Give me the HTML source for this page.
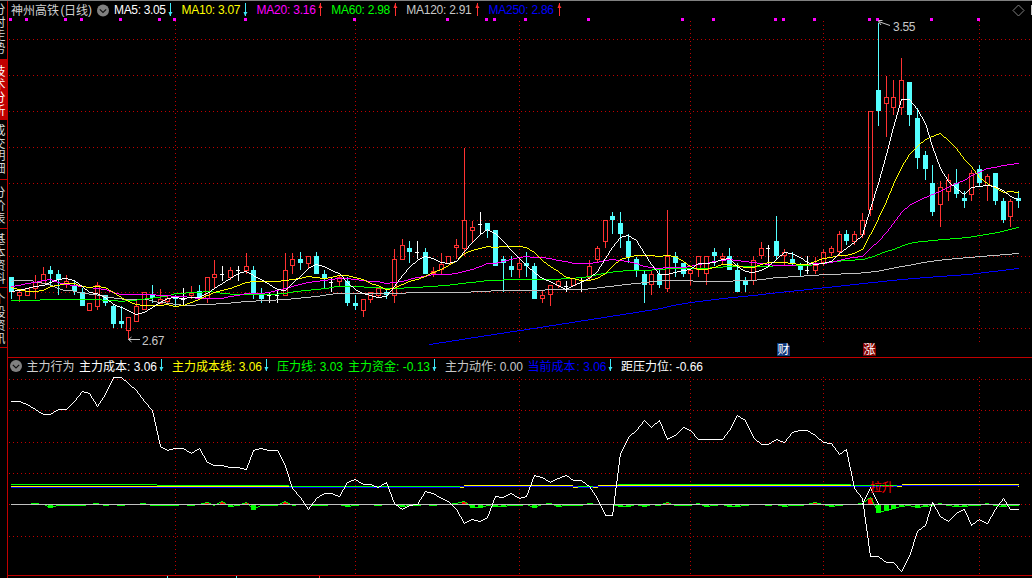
<!DOCTYPE html>
<html><head><meta charset="utf-8"><title>chart</title>
<style>html,body{margin:0;padding:0;background:#000;overflow:hidden}body{width:1032px;height:578px;font-family:"Liberation Sans",sans-serif}svg text{font-family:"Liberation Sans",sans-serif}svg text.cjk{font-family:"Liberation Sans","Noto Sans CJK SC",sans-serif}</style>
</head><body><svg width="1032" height="578" viewBox="0 0 1032 578" style="display:block"><rect x="0" y="0" width="1032" height="578" fill="#000"/>
<rect x="0" y="0" width="1032" height="1" fill="#808080"/>
<path d="M9 39h1M13 39h1M17 39h1M21 39h1M25 39h1M29 39h1M33 39h1M37 39h1M41 39h1M45 39h1M49 39h1M53 39h1M57 39h1M61 39h1M65 39h1M69 39h1M73 39h1M77 39h1M81 39h1M85 39h1M89 39h1M93 39h1M97 39h1M101 39h1M105 39h1M109 39h1M113 39h1M117 39h1M121 39h1M125 39h1M129 39h1M133 39h1M137 39h1M141 39h1M145 39h1M149 39h1M153 39h1M157 39h1M161 39h1M165 39h1M169 39h1M173 39h1M177 39h1M181 39h1M185 39h1M189 39h1M193 39h1M197 39h1M201 39h1M205 39h1M209 39h1M213 39h1M217 39h1M221 39h1M225 39h1M229 39h1M233 39h1M237 39h1M241 39h1M245 39h1M249 39h1M253 39h1M257 39h1M261 39h1M265 39h1M269 39h1M273 39h1M277 39h1M281 39h1M285 39h1M289 39h1M293 39h1M297 39h1M301 39h1M305 39h1M309 39h1M313 39h1M317 39h1M321 39h1M325 39h1M329 39h1M333 39h1M337 39h1M341 39h1M345 39h1M349 39h1M353 39h1M357 39h1M361 39h1M365 39h1M369 39h1M373 39h1M377 39h1M381 39h1M385 39h1M389 39h1M393 39h1M397 39h1M401 39h1M405 39h1M409 39h1M413 39h1M417 39h1M421 39h1M425 39h1M429 39h1M433 39h1M437 39h1M441 39h1M445 39h1M449 39h1M453 39h1M457 39h1M461 39h1M465 39h1M469 39h1M473 39h1M477 39h1M481 39h1M485 39h1M489 39h1M493 39h1M497 39h1M501 39h1M505 39h1M509 39h1M513 39h1M517 39h1M521 39h1M525 39h1M529 39h1M533 39h1M537 39h1M541 39h1M545 39h1M549 39h1M553 39h1M557 39h1M561 39h1M565 39h1M569 39h1M573 39h1M577 39h1M581 39h1M585 39h1M589 39h1M593 39h1M597 39h1M601 39h1M605 39h1M609 39h1M613 39h1M617 39h1M621 39h1M625 39h1M629 39h1M633 39h1M637 39h1M641 39h1M645 39h1M649 39h1M653 39h1M657 39h1M661 39h1M665 39h1M669 39h1M673 39h1M677 39h1M681 39h1M685 39h1M689 39h1M693 39h1M697 39h1M701 39h1M705 39h1M709 39h1M713 39h1M717 39h1M721 39h1M725 39h1M729 39h1M733 39h1M737 39h1M741 39h1M745 39h1M749 39h1M753 39h1M757 39h1M761 39h1M765 39h1M769 39h1M773 39h1M777 39h1M781 39h1M785 39h1M789 39h1M793 39h1M797 39h1M801 39h1M805 39h1M809 39h1M813 39h1M817 39h1M821 39h1M825 39h1M829 39h1M833 39h1M837 39h1M841 39h1M845 39h1M849 39h1M853 39h1M857 39h1M861 39h1M865 39h1M869 39h1M873 39h1M877 39h1M881 39h1M885 39h1M889 39h1M893 39h1M897 39h1M901 39h1M905 39h1M909 39h1M913 39h1M917 39h1M921 39h1M925 39h1M929 39h1M933 39h1M937 39h1M941 39h1M945 39h1M949 39h1M953 39h1M957 39h1M961 39h1M965 39h1M969 39h1M973 39h1M977 39h1M981 39h1M985 39h1M989 39h1M993 39h1M997 39h1M1001 39h1M1005 39h1M1009 39h1M1013 39h1M1017 39h1M1021 39h1M1025 39h1M1029 39h1M9 75h1M13 75h1M17 75h1M21 75h1M25 75h1M29 75h1M33 75h1M37 75h1M41 75h1M45 75h1M49 75h1M53 75h1M57 75h1M61 75h1M65 75h1M69 75h1M73 75h1M77 75h1M81 75h1M85 75h1M89 75h1M93 75h1M97 75h1M101 75h1M105 75h1M109 75h1M113 75h1M117 75h1M121 75h1M125 75h1M129 75h1M133 75h1M137 75h1M141 75h1M145 75h1M149 75h1M153 75h1M157 75h1M161 75h1M165 75h1M169 75h1M173 75h1M177 75h1M181 75h1M185 75h1M189 75h1M193 75h1M197 75h1M201 75h1M205 75h1M209 75h1M213 75h1M217 75h1M221 75h1M225 75h1M229 75h1M233 75h1M237 75h1M241 75h1M245 75h1M249 75h1M253 75h1M257 75h1M261 75h1M265 75h1M269 75h1M273 75h1M277 75h1M281 75h1M285 75h1M289 75h1M293 75h1M297 75h1M301 75h1M305 75h1M309 75h1M313 75h1M317 75h1M321 75h1M325 75h1M329 75h1M333 75h1M337 75h1M341 75h1M345 75h1M349 75h1M353 75h1M357 75h1M361 75h1M365 75h1M369 75h1M373 75h1M377 75h1M381 75h1M385 75h1M389 75h1M393 75h1M397 75h1M401 75h1M405 75h1M409 75h1M413 75h1M417 75h1M421 75h1M425 75h1M429 75h1M433 75h1M437 75h1M441 75h1M445 75h1M449 75h1M453 75h1M457 75h1M461 75h1M465 75h1M469 75h1M473 75h1M477 75h1M481 75h1M485 75h1M489 75h1M493 75h1M497 75h1M501 75h1M505 75h1M509 75h1M513 75h1M517 75h1M521 75h1M525 75h1M529 75h1M533 75h1M537 75h1M541 75h1M545 75h1M549 75h1M553 75h1M557 75h1M561 75h1M565 75h1M569 75h1M573 75h1M577 75h1M581 75h1M585 75h1M589 75h1M593 75h1M597 75h1M601 75h1M605 75h1M609 75h1M613 75h1M617 75h1M621 75h1M625 75h1M629 75h1M633 75h1M637 75h1M641 75h1M645 75h1M649 75h1M653 75h1M657 75h1M661 75h1M665 75h1M669 75h1M673 75h1M677 75h1M681 75h1M685 75h1M689 75h1M693 75h1M697 75h1M701 75h1M705 75h1M709 75h1M713 75h1M717 75h1M721 75h1M725 75h1M729 75h1M733 75h1M737 75h1M741 75h1M745 75h1M749 75h1M753 75h1M757 75h1M761 75h1M765 75h1M769 75h1M773 75h1M777 75h1M781 75h1M785 75h1M789 75h1M793 75h1M797 75h1M801 75h1M805 75h1M809 75h1M813 75h1M817 75h1M821 75h1M825 75h1M829 75h1M833 75h1M837 75h1M841 75h1M845 75h1M849 75h1M853 75h1M857 75h1M861 75h1M865 75h1M869 75h1M873 75h1M877 75h1M881 75h1M885 75h1M889 75h1M893 75h1M897 75h1M901 75h1M905 75h1M909 75h1M913 75h1M917 75h1M921 75h1M925 75h1M929 75h1M933 75h1M937 75h1M941 75h1M945 75h1M949 75h1M953 75h1M957 75h1M961 75h1M965 75h1M969 75h1M973 75h1M977 75h1M981 75h1M985 75h1M989 75h1M993 75h1M997 75h1M1001 75h1M1005 75h1M1009 75h1M1013 75h1M1017 75h1M1021 75h1M1025 75h1M1029 75h1M9 111h1M13 111h1M17 111h1M21 111h1M25 111h1M29 111h1M33 111h1M37 111h1M41 111h1M45 111h1M49 111h1M53 111h1M57 111h1M61 111h1M65 111h1M69 111h1M73 111h1M77 111h1M81 111h1M85 111h1M89 111h1M93 111h1M97 111h1M101 111h1M105 111h1M109 111h1M113 111h1M117 111h1M121 111h1M125 111h1M129 111h1M133 111h1M137 111h1M141 111h1M145 111h1M149 111h1M153 111h1M157 111h1M161 111h1M165 111h1M169 111h1M173 111h1M177 111h1M181 111h1M185 111h1M189 111h1M193 111h1M197 111h1M201 111h1M205 111h1M209 111h1M213 111h1M217 111h1M221 111h1M225 111h1M229 111h1M233 111h1M237 111h1M241 111h1M245 111h1M249 111h1M253 111h1M257 111h1M261 111h1M265 111h1M269 111h1M273 111h1M277 111h1M281 111h1M285 111h1M289 111h1M293 111h1M297 111h1M301 111h1M305 111h1M309 111h1M313 111h1M317 111h1M321 111h1M325 111h1M329 111h1M333 111h1M337 111h1M341 111h1M345 111h1M349 111h1M353 111h1M357 111h1M361 111h1M365 111h1M369 111h1M373 111h1M377 111h1M381 111h1M385 111h1M389 111h1M393 111h1M397 111h1M401 111h1M405 111h1M409 111h1M413 111h1M417 111h1M421 111h1M425 111h1M429 111h1M433 111h1M437 111h1M441 111h1M445 111h1M449 111h1M453 111h1M457 111h1M461 111h1M465 111h1M469 111h1M473 111h1M477 111h1M481 111h1M485 111h1M489 111h1M493 111h1M497 111h1M501 111h1M505 111h1M509 111h1M513 111h1M517 111h1M521 111h1M525 111h1M529 111h1M533 111h1M537 111h1M541 111h1M545 111h1M549 111h1M553 111h1M557 111h1M561 111h1M565 111h1M569 111h1M573 111h1M577 111h1M581 111h1M585 111h1M589 111h1M593 111h1M597 111h1M601 111h1M605 111h1M609 111h1M613 111h1M617 111h1M621 111h1M625 111h1M629 111h1M633 111h1M637 111h1M641 111h1M645 111h1M649 111h1M653 111h1M657 111h1M661 111h1M665 111h1M669 111h1M673 111h1M677 111h1M681 111h1M685 111h1M689 111h1M693 111h1M697 111h1M701 111h1M705 111h1M709 111h1M713 111h1M717 111h1M721 111h1M725 111h1M729 111h1M733 111h1M737 111h1M741 111h1M745 111h1M749 111h1M753 111h1M757 111h1M761 111h1M765 111h1M769 111h1M773 111h1M777 111h1M781 111h1M785 111h1M789 111h1M793 111h1M797 111h1M801 111h1M805 111h1M809 111h1M813 111h1M817 111h1M821 111h1M825 111h1M829 111h1M833 111h1M837 111h1M841 111h1M845 111h1M849 111h1M853 111h1M857 111h1M861 111h1M865 111h1M869 111h1M873 111h1M877 111h1M881 111h1M885 111h1M889 111h1M893 111h1M897 111h1M901 111h1M905 111h1M909 111h1M913 111h1M917 111h1M921 111h1M925 111h1M929 111h1M933 111h1M937 111h1M941 111h1M945 111h1M949 111h1M953 111h1M957 111h1M961 111h1M965 111h1M969 111h1M973 111h1M977 111h1M981 111h1M985 111h1M989 111h1M993 111h1M997 111h1M1001 111h1M1005 111h1M1009 111h1M1013 111h1M1017 111h1M1021 111h1M1025 111h1M1029 111h1M9 147h1M13 147h1M17 147h1M21 147h1M25 147h1M29 147h1M33 147h1M37 147h1M41 147h1M45 147h1M49 147h1M53 147h1M57 147h1M61 147h1M65 147h1M69 147h1M73 147h1M77 147h1M81 147h1M85 147h1M89 147h1M93 147h1M97 147h1M101 147h1M105 147h1M109 147h1M113 147h1M117 147h1M121 147h1M125 147h1M129 147h1M133 147h1M137 147h1M141 147h1M145 147h1M149 147h1M153 147h1M157 147h1M161 147h1M165 147h1M169 147h1M173 147h1M177 147h1M181 147h1M185 147h1M189 147h1M193 147h1M197 147h1M201 147h1M205 147h1M209 147h1M213 147h1M217 147h1M221 147h1M225 147h1M229 147h1M233 147h1M237 147h1M241 147h1M245 147h1M249 147h1M253 147h1M257 147h1M261 147h1M265 147h1M269 147h1M273 147h1M277 147h1M281 147h1M285 147h1M289 147h1M293 147h1M297 147h1M301 147h1M305 147h1M309 147h1M313 147h1M317 147h1M321 147h1M325 147h1M329 147h1M333 147h1M337 147h1M341 147h1M345 147h1M349 147h1M353 147h1M357 147h1M361 147h1M365 147h1M369 147h1M373 147h1M377 147h1M381 147h1M385 147h1M389 147h1M393 147h1M397 147h1M401 147h1M405 147h1M409 147h1M413 147h1M417 147h1M421 147h1M425 147h1M429 147h1M433 147h1M437 147h1M441 147h1M445 147h1M449 147h1M453 147h1M457 147h1M461 147h1M465 147h1M469 147h1M473 147h1M477 147h1M481 147h1M485 147h1M489 147h1M493 147h1M497 147h1M501 147h1M505 147h1M509 147h1M513 147h1M517 147h1M521 147h1M525 147h1M529 147h1M533 147h1M537 147h1M541 147h1M545 147h1M549 147h1M553 147h1M557 147h1M561 147h1M565 147h1M569 147h1M573 147h1M577 147h1M581 147h1M585 147h1M589 147h1M593 147h1M597 147h1M601 147h1M605 147h1M609 147h1M613 147h1M617 147h1M621 147h1M625 147h1M629 147h1M633 147h1M637 147h1M641 147h1M645 147h1M649 147h1M653 147h1M657 147h1M661 147h1M665 147h1M669 147h1M673 147h1M677 147h1M681 147h1M685 147h1M689 147h1M693 147h1M697 147h1M701 147h1M705 147h1M709 147h1M713 147h1M717 147h1M721 147h1M725 147h1M729 147h1M733 147h1M737 147h1M741 147h1M745 147h1M749 147h1M753 147h1M757 147h1M761 147h1M765 147h1M769 147h1M773 147h1M777 147h1M781 147h1M785 147h1M789 147h1M793 147h1M797 147h1M801 147h1M805 147h1M809 147h1M813 147h1M817 147h1M821 147h1M825 147h1M829 147h1M833 147h1M837 147h1M841 147h1M845 147h1M849 147h1M853 147h1M857 147h1M861 147h1M865 147h1M869 147h1M873 147h1M877 147h1M881 147h1M885 147h1M889 147h1M893 147h1M897 147h1M901 147h1M905 147h1M909 147h1M913 147h1M917 147h1M921 147h1M925 147h1M929 147h1M933 147h1M937 147h1M941 147h1M945 147h1M949 147h1M953 147h1M957 147h1M961 147h1M965 147h1M969 147h1M973 147h1M977 147h1M981 147h1M985 147h1M989 147h1M993 147h1M997 147h1M1001 147h1M1005 147h1M1009 147h1M1013 147h1M1017 147h1M1021 147h1M1025 147h1M1029 147h1M9 183h1M13 183h1M17 183h1M21 183h1M25 183h1M29 183h1M33 183h1M37 183h1M41 183h1M45 183h1M49 183h1M53 183h1M57 183h1M61 183h1M65 183h1M69 183h1M73 183h1M77 183h1M81 183h1M85 183h1M89 183h1M93 183h1M97 183h1M101 183h1M105 183h1M109 183h1M113 183h1M117 183h1M121 183h1M125 183h1M129 183h1M133 183h1M137 183h1M141 183h1M145 183h1M149 183h1M153 183h1M157 183h1M161 183h1M165 183h1M169 183h1M173 183h1M177 183h1M181 183h1M185 183h1M189 183h1M193 183h1M197 183h1M201 183h1M205 183h1M209 183h1M213 183h1M217 183h1M221 183h1M225 183h1M229 183h1M233 183h1M237 183h1M241 183h1M245 183h1M249 183h1M253 183h1M257 183h1M261 183h1M265 183h1M269 183h1M273 183h1M277 183h1M281 183h1M285 183h1M289 183h1M293 183h1M297 183h1M301 183h1M305 183h1M309 183h1M313 183h1M317 183h1M321 183h1M325 183h1M329 183h1M333 183h1M337 183h1M341 183h1M345 183h1M349 183h1M353 183h1M357 183h1M361 183h1M365 183h1M369 183h1M373 183h1M377 183h1M381 183h1M385 183h1M389 183h1M393 183h1M397 183h1M401 183h1M405 183h1M409 183h1M413 183h1M417 183h1M421 183h1M425 183h1M429 183h1M433 183h1M437 183h1M441 183h1M445 183h1M449 183h1M453 183h1M457 183h1M461 183h1M465 183h1M469 183h1M473 183h1M477 183h1M481 183h1M485 183h1M489 183h1M493 183h1M497 183h1M501 183h1M505 183h1M509 183h1M513 183h1M517 183h1M521 183h1M525 183h1M529 183h1M533 183h1M537 183h1M541 183h1M545 183h1M549 183h1M553 183h1M557 183h1M561 183h1M565 183h1M569 183h1M573 183h1M577 183h1M581 183h1M585 183h1M589 183h1M593 183h1M597 183h1M601 183h1M605 183h1M609 183h1M613 183h1M617 183h1M621 183h1M625 183h1M629 183h1M633 183h1M637 183h1M641 183h1M645 183h1M649 183h1M653 183h1M657 183h1M661 183h1M665 183h1M669 183h1M673 183h1M677 183h1M681 183h1M685 183h1M689 183h1M693 183h1M697 183h1M701 183h1M705 183h1M709 183h1M713 183h1M717 183h1M721 183h1M725 183h1M729 183h1M733 183h1M737 183h1M741 183h1M745 183h1M749 183h1M753 183h1M757 183h1M761 183h1M765 183h1M769 183h1M773 183h1M777 183h1M781 183h1M785 183h1M789 183h1M793 183h1M797 183h1M801 183h1M805 183h1M809 183h1M813 183h1M817 183h1M821 183h1M825 183h1M829 183h1M833 183h1M837 183h1M841 183h1M845 183h1M849 183h1M853 183h1M857 183h1M861 183h1M865 183h1M869 183h1M873 183h1M877 183h1M881 183h1M885 183h1M889 183h1M893 183h1M897 183h1M901 183h1M905 183h1M909 183h1M913 183h1M917 183h1M921 183h1M925 183h1M929 183h1M933 183h1M937 183h1M941 183h1M945 183h1M949 183h1M953 183h1M957 183h1M961 183h1M965 183h1M969 183h1M973 183h1M977 183h1M981 183h1M985 183h1M989 183h1M993 183h1M997 183h1M1001 183h1M1005 183h1M1009 183h1M1013 183h1M1017 183h1M1021 183h1M1025 183h1M1029 183h1M9 220h1M13 220h1M17 220h1M21 220h1M25 220h1M29 220h1M33 220h1M37 220h1M41 220h1M45 220h1M49 220h1M53 220h1M57 220h1M61 220h1M65 220h1M69 220h1M73 220h1M77 220h1M81 220h1M85 220h1M89 220h1M93 220h1M97 220h1M101 220h1M105 220h1M109 220h1M113 220h1M117 220h1M121 220h1M125 220h1M129 220h1M133 220h1M137 220h1M141 220h1M145 220h1M149 220h1M153 220h1M157 220h1M161 220h1M165 220h1M169 220h1M173 220h1M177 220h1M181 220h1M185 220h1M189 220h1M193 220h1M197 220h1M201 220h1M205 220h1M209 220h1M213 220h1M217 220h1M221 220h1M225 220h1M229 220h1M233 220h1M237 220h1M241 220h1M245 220h1M249 220h1M253 220h1M257 220h1M261 220h1M265 220h1M269 220h1M273 220h1M277 220h1M281 220h1M285 220h1M289 220h1M293 220h1M297 220h1M301 220h1M305 220h1M309 220h1M313 220h1M317 220h1M321 220h1M325 220h1M329 220h1M333 220h1M337 220h1M341 220h1M345 220h1M349 220h1M353 220h1M357 220h1M361 220h1M365 220h1M369 220h1M373 220h1M377 220h1M381 220h1M385 220h1M389 220h1M393 220h1M397 220h1M401 220h1M405 220h1M409 220h1M413 220h1M417 220h1M421 220h1M425 220h1M429 220h1M433 220h1M437 220h1M441 220h1M445 220h1M449 220h1M453 220h1M457 220h1M461 220h1M465 220h1M469 220h1M473 220h1M477 220h1M481 220h1M485 220h1M489 220h1M493 220h1M497 220h1M501 220h1M505 220h1M509 220h1M513 220h1M517 220h1M521 220h1M525 220h1M529 220h1M533 220h1M537 220h1M541 220h1M545 220h1M549 220h1M553 220h1M557 220h1M561 220h1M565 220h1M569 220h1M573 220h1M577 220h1M581 220h1M585 220h1M589 220h1M593 220h1M597 220h1M601 220h1M605 220h1M609 220h1M613 220h1M617 220h1M621 220h1M625 220h1M629 220h1M633 220h1M637 220h1M641 220h1M645 220h1M649 220h1M653 220h1M657 220h1M661 220h1M665 220h1M669 220h1M673 220h1M677 220h1M681 220h1M685 220h1M689 220h1M693 220h1M697 220h1M701 220h1M705 220h1M709 220h1M713 220h1M717 220h1M721 220h1M725 220h1M729 220h1M733 220h1M737 220h1M741 220h1M745 220h1M749 220h1M753 220h1M757 220h1M761 220h1M765 220h1M769 220h1M773 220h1M777 220h1M781 220h1M785 220h1M789 220h1M793 220h1M797 220h1M801 220h1M805 220h1M809 220h1M813 220h1M817 220h1M821 220h1M825 220h1M829 220h1M833 220h1M837 220h1M841 220h1M845 220h1M849 220h1M853 220h1M857 220h1M861 220h1M865 220h1M869 220h1M873 220h1M877 220h1M881 220h1M885 220h1M889 220h1M893 220h1M897 220h1M901 220h1M905 220h1M909 220h1M913 220h1M917 220h1M921 220h1M925 220h1M929 220h1M933 220h1M937 220h1M941 220h1M945 220h1M949 220h1M953 220h1M957 220h1M961 220h1M965 220h1M969 220h1M973 220h1M977 220h1M981 220h1M985 220h1M989 220h1M993 220h1M997 220h1M1001 220h1M1005 220h1M1009 220h1M1013 220h1M1017 220h1M1021 220h1M1025 220h1M1029 220h1M9 256h1M13 256h1M17 256h1M21 256h1M25 256h1M29 256h1M33 256h1M37 256h1M41 256h1M45 256h1M49 256h1M53 256h1M57 256h1M61 256h1M65 256h1M69 256h1M73 256h1M77 256h1M81 256h1M85 256h1M89 256h1M93 256h1M97 256h1M101 256h1M105 256h1M109 256h1M113 256h1M117 256h1M121 256h1M125 256h1M129 256h1M133 256h1M137 256h1M141 256h1M145 256h1M149 256h1M153 256h1M157 256h1M161 256h1M165 256h1M169 256h1M173 256h1M177 256h1M181 256h1M185 256h1M189 256h1M193 256h1M197 256h1M201 256h1M205 256h1M209 256h1M213 256h1M217 256h1M221 256h1M225 256h1M229 256h1M233 256h1M237 256h1M241 256h1M245 256h1M249 256h1M253 256h1M257 256h1M261 256h1M265 256h1M269 256h1M273 256h1M277 256h1M281 256h1M285 256h1M289 256h1M293 256h1M297 256h1M301 256h1M305 256h1M309 256h1M313 256h1M317 256h1M321 256h1M325 256h1M329 256h1M333 256h1M337 256h1M341 256h1M345 256h1M349 256h1M353 256h1M357 256h1M361 256h1M365 256h1M369 256h1M373 256h1M377 256h1M381 256h1M385 256h1M389 256h1M393 256h1M397 256h1M401 256h1M405 256h1M409 256h1M413 256h1M417 256h1M421 256h1M425 256h1M429 256h1M433 256h1M437 256h1M441 256h1M445 256h1M449 256h1M453 256h1M457 256h1M461 256h1M465 256h1M469 256h1M473 256h1M477 256h1M481 256h1M485 256h1M489 256h1M493 256h1M497 256h1M501 256h1M505 256h1M509 256h1M513 256h1M517 256h1M521 256h1M525 256h1M529 256h1M533 256h1M537 256h1M541 256h1M545 256h1M549 256h1M553 256h1M557 256h1M561 256h1M565 256h1M569 256h1M573 256h1M577 256h1M581 256h1M585 256h1M589 256h1M593 256h1M597 256h1M601 256h1M605 256h1M609 256h1M613 256h1M617 256h1M621 256h1M625 256h1M629 256h1M633 256h1M637 256h1M641 256h1M645 256h1M649 256h1M653 256h1M657 256h1M661 256h1M665 256h1M669 256h1M673 256h1M677 256h1M681 256h1M685 256h1M689 256h1M693 256h1M697 256h1M701 256h1M705 256h1M709 256h1M713 256h1M717 256h1M721 256h1M725 256h1M729 256h1M733 256h1M737 256h1M741 256h1M745 256h1M749 256h1M753 256h1M757 256h1M761 256h1M765 256h1M769 256h1M773 256h1M777 256h1M781 256h1M785 256h1M789 256h1M793 256h1M797 256h1M801 256h1M805 256h1M809 256h1M813 256h1M817 256h1M821 256h1M825 256h1M829 256h1M833 256h1M837 256h1M841 256h1M845 256h1M849 256h1M853 256h1M857 256h1M861 256h1M865 256h1M869 256h1M873 256h1M877 256h1M881 256h1M885 256h1M889 256h1M893 256h1M897 256h1M901 256h1M905 256h1M909 256h1M913 256h1M917 256h1M921 256h1M925 256h1M929 256h1M933 256h1M937 256h1M941 256h1M945 256h1M949 256h1M953 256h1M957 256h1M961 256h1M965 256h1M969 256h1M973 256h1M977 256h1M981 256h1M985 256h1M989 256h1M993 256h1M997 256h1M1001 256h1M1005 256h1M1009 256h1M1013 256h1M1017 256h1M1021 256h1M1025 256h1M1029 256h1M9 292h1M13 292h1M17 292h1M21 292h1M25 292h1M29 292h1M33 292h1M37 292h1M41 292h1M45 292h1M49 292h1M53 292h1M57 292h1M61 292h1M65 292h1M69 292h1M73 292h1M77 292h1M81 292h1M85 292h1M89 292h1M93 292h1M97 292h1M101 292h1M105 292h1M109 292h1M113 292h1M117 292h1M121 292h1M125 292h1M129 292h1M133 292h1M137 292h1M141 292h1M145 292h1M149 292h1M153 292h1M157 292h1M161 292h1M165 292h1M169 292h1M173 292h1M177 292h1M181 292h1M185 292h1M189 292h1M193 292h1M197 292h1M201 292h1M205 292h1M209 292h1M213 292h1M217 292h1M221 292h1M225 292h1M229 292h1M233 292h1M237 292h1M241 292h1M245 292h1M249 292h1M253 292h1M257 292h1M261 292h1M265 292h1M269 292h1M273 292h1M277 292h1M281 292h1M285 292h1M289 292h1M293 292h1M297 292h1M301 292h1M305 292h1M309 292h1M313 292h1M317 292h1M321 292h1M325 292h1M329 292h1M333 292h1M337 292h1M341 292h1M345 292h1M349 292h1M353 292h1M357 292h1M361 292h1M365 292h1M369 292h1M373 292h1M377 292h1M381 292h1M385 292h1M389 292h1M393 292h1M397 292h1M401 292h1M405 292h1M409 292h1M413 292h1M417 292h1M421 292h1M425 292h1M429 292h1M433 292h1M437 292h1M441 292h1M445 292h1M449 292h1M453 292h1M457 292h1M461 292h1M465 292h1M469 292h1M473 292h1M477 292h1M481 292h1M485 292h1M489 292h1M493 292h1M497 292h1M501 292h1M505 292h1M509 292h1M513 292h1M517 292h1M521 292h1M525 292h1M529 292h1M533 292h1M537 292h1M541 292h1M545 292h1M549 292h1M553 292h1M557 292h1M561 292h1M565 292h1M569 292h1M573 292h1M577 292h1M581 292h1M585 292h1M589 292h1M593 292h1M597 292h1M601 292h1M605 292h1M609 292h1M613 292h1M617 292h1M621 292h1M625 292h1M629 292h1M633 292h1M637 292h1M641 292h1M645 292h1M649 292h1M653 292h1M657 292h1M661 292h1M665 292h1M669 292h1M673 292h1M677 292h1M681 292h1M685 292h1M689 292h1M693 292h1M697 292h1M701 292h1M705 292h1M709 292h1M713 292h1M717 292h1M721 292h1M725 292h1M729 292h1M733 292h1M737 292h1M741 292h1M745 292h1M749 292h1M753 292h1M757 292h1M761 292h1M765 292h1M769 292h1M773 292h1M777 292h1M781 292h1M785 292h1M789 292h1M793 292h1M797 292h1M801 292h1M805 292h1M809 292h1M813 292h1M817 292h1M821 292h1M825 292h1M829 292h1M833 292h1M837 292h1M841 292h1M845 292h1M849 292h1M853 292h1M857 292h1M861 292h1M865 292h1M869 292h1M873 292h1M877 292h1M881 292h1M885 292h1M889 292h1M893 292h1M897 292h1M901 292h1M905 292h1M909 292h1M913 292h1M917 292h1M921 292h1M925 292h1M929 292h1M933 292h1M937 292h1M941 292h1M945 292h1M949 292h1M953 292h1M957 292h1M961 292h1M965 292h1M969 292h1M973 292h1M977 292h1M981 292h1M985 292h1M989 292h1M993 292h1M997 292h1M1001 292h1M1005 292h1M1009 292h1M1013 292h1M1017 292h1M1021 292h1M1025 292h1M1029 292h1M9 328h1M13 328h1M17 328h1M21 328h1M25 328h1M29 328h1M33 328h1M37 328h1M41 328h1M45 328h1M49 328h1M53 328h1M57 328h1M61 328h1M65 328h1M69 328h1M73 328h1M77 328h1M81 328h1M85 328h1M89 328h1M93 328h1M97 328h1M101 328h1M105 328h1M109 328h1M113 328h1M117 328h1M121 328h1M125 328h1M129 328h1M133 328h1M137 328h1M141 328h1M145 328h1M149 328h1M153 328h1M157 328h1M161 328h1M165 328h1M169 328h1M173 328h1M177 328h1M181 328h1M185 328h1M189 328h1M193 328h1M197 328h1M201 328h1M205 328h1M209 328h1M213 328h1M217 328h1M221 328h1M225 328h1M229 328h1M233 328h1M237 328h1M241 328h1M245 328h1M249 328h1M253 328h1M257 328h1M261 328h1M265 328h1M269 328h1M273 328h1M277 328h1M281 328h1M285 328h1M289 328h1M293 328h1M297 328h1M301 328h1M305 328h1M309 328h1M313 328h1M317 328h1M321 328h1M325 328h1M329 328h1M333 328h1M337 328h1M341 328h1M345 328h1M349 328h1M353 328h1M357 328h1M361 328h1M365 328h1M369 328h1M373 328h1M377 328h1M381 328h1M385 328h1M389 328h1M393 328h1M397 328h1M401 328h1M405 328h1M409 328h1M413 328h1M417 328h1M421 328h1M425 328h1M429 328h1M433 328h1M437 328h1M441 328h1M445 328h1M449 328h1M453 328h1M457 328h1M461 328h1M465 328h1M469 328h1M473 328h1M477 328h1M481 328h1M485 328h1M489 328h1M493 328h1M497 328h1M501 328h1M505 328h1M509 328h1M513 328h1M517 328h1M521 328h1M525 328h1M529 328h1M533 328h1M537 328h1M541 328h1M545 328h1M549 328h1M553 328h1M557 328h1M561 328h1M565 328h1M569 328h1M573 328h1M577 328h1M581 328h1M585 328h1M589 328h1M593 328h1M597 328h1M601 328h1M605 328h1M609 328h1M613 328h1M617 328h1M621 328h1M625 328h1M629 328h1M633 328h1M637 328h1M641 328h1M645 328h1M649 328h1M653 328h1M657 328h1M661 328h1M665 328h1M669 328h1M673 328h1M677 328h1M681 328h1M685 328h1M689 328h1M693 328h1M697 328h1M701 328h1M705 328h1M709 328h1M713 328h1M717 328h1M721 328h1M725 328h1M729 328h1M733 328h1M737 328h1M741 328h1M745 328h1M749 328h1M753 328h1M757 328h1M761 328h1M765 328h1M769 328h1M773 328h1M777 328h1M781 328h1M785 328h1M789 328h1M793 328h1M797 328h1M801 328h1M805 328h1M809 328h1M813 328h1M817 328h1M821 328h1M825 328h1M829 328h1M833 328h1M837 328h1M841 328h1M845 328h1M849 328h1M853 328h1M857 328h1M861 328h1M865 328h1M869 328h1M873 328h1M877 328h1M881 328h1M885 328h1M889 328h1M893 328h1M897 328h1M901 328h1M905 328h1M909 328h1M913 328h1M917 328h1M921 328h1M925 328h1M929 328h1M933 328h1M937 328h1M941 328h1M945 328h1M949 328h1M953 328h1M957 328h1M961 328h1M965 328h1M969 328h1M973 328h1M977 328h1M981 328h1M985 328h1M989 328h1M993 328h1M997 328h1M1001 328h1M1005 328h1M1009 328h1M1013 328h1M1017 328h1M1021 328h1M1025 328h1M1029 328h1M9 379h1M13 379h1M17 379h1M21 379h1M25 379h1M29 379h1M33 379h1M37 379h1M41 379h1M45 379h1M49 379h1M53 379h1M57 379h1M61 379h1M65 379h1M69 379h1M73 379h1M77 379h1M81 379h1M85 379h1M89 379h1M93 379h1M97 379h1M101 379h1M105 379h1M109 379h1M113 379h1M117 379h1M121 379h1M125 379h1M129 379h1M133 379h1M137 379h1M141 379h1M145 379h1M149 379h1M153 379h1M157 379h1M161 379h1M165 379h1M169 379h1M173 379h1M177 379h1M181 379h1M185 379h1M189 379h1M193 379h1M197 379h1M201 379h1M205 379h1M209 379h1M213 379h1M217 379h1M221 379h1M225 379h1M229 379h1M233 379h1M237 379h1M241 379h1M245 379h1M249 379h1M253 379h1M257 379h1M261 379h1M265 379h1M269 379h1M273 379h1M277 379h1M281 379h1M285 379h1M289 379h1M293 379h1M297 379h1M301 379h1M305 379h1M309 379h1M313 379h1M317 379h1M321 379h1M325 379h1M329 379h1M333 379h1M337 379h1M341 379h1M345 379h1M349 379h1M353 379h1M357 379h1M361 379h1M365 379h1M369 379h1M373 379h1M377 379h1M381 379h1M385 379h1M389 379h1M393 379h1M397 379h1M401 379h1M405 379h1M409 379h1M413 379h1M417 379h1M421 379h1M425 379h1M429 379h1M433 379h1M437 379h1M441 379h1M445 379h1M449 379h1M453 379h1M457 379h1M461 379h1M465 379h1M469 379h1M473 379h1M477 379h1M481 379h1M485 379h1M489 379h1M493 379h1M497 379h1M501 379h1M505 379h1M509 379h1M513 379h1M517 379h1M521 379h1M525 379h1M529 379h1M533 379h1M537 379h1M541 379h1M545 379h1M549 379h1M553 379h1M557 379h1M561 379h1M565 379h1M569 379h1M573 379h1M577 379h1M581 379h1M585 379h1M589 379h1M593 379h1M597 379h1M601 379h1M605 379h1M609 379h1M613 379h1M617 379h1M621 379h1M625 379h1M629 379h1M633 379h1M637 379h1M641 379h1M645 379h1M649 379h1M653 379h1M657 379h1M661 379h1M665 379h1M669 379h1M673 379h1M677 379h1M681 379h1M685 379h1M689 379h1M693 379h1M697 379h1M701 379h1M705 379h1M709 379h1M713 379h1M717 379h1M721 379h1M725 379h1M729 379h1M733 379h1M737 379h1M741 379h1M745 379h1M749 379h1M753 379h1M757 379h1M761 379h1M765 379h1M769 379h1M773 379h1M777 379h1M781 379h1M785 379h1M789 379h1M793 379h1M797 379h1M801 379h1M805 379h1M809 379h1M813 379h1M817 379h1M821 379h1M825 379h1M829 379h1M833 379h1M837 379h1M841 379h1M845 379h1M849 379h1M853 379h1M857 379h1M861 379h1M865 379h1M869 379h1M873 379h1M877 379h1M881 379h1M885 379h1M889 379h1M893 379h1M897 379h1M901 379h1M905 379h1M909 379h1M913 379h1M917 379h1M921 379h1M925 379h1M929 379h1M933 379h1M937 379h1M941 379h1M945 379h1M949 379h1M953 379h1M957 379h1M961 379h1M965 379h1M969 379h1M973 379h1M977 379h1M981 379h1M985 379h1M989 379h1M993 379h1M997 379h1M1001 379h1M1005 379h1M1009 379h1M1013 379h1M1017 379h1M1021 379h1M1025 379h1M1029 379h1M9 410h1M13 410h1M17 410h1M21 410h1M25 410h1M29 410h1M33 410h1M37 410h1M41 410h1M45 410h1M49 410h1M53 410h1M57 410h1M61 410h1M65 410h1M69 410h1M73 410h1M77 410h1M81 410h1M85 410h1M89 410h1M93 410h1M97 410h1M101 410h1M105 410h1M109 410h1M113 410h1M117 410h1M121 410h1M125 410h1M129 410h1M133 410h1M137 410h1M141 410h1M145 410h1M149 410h1M153 410h1M157 410h1M161 410h1M165 410h1M169 410h1M173 410h1M177 410h1M181 410h1M185 410h1M189 410h1M193 410h1M197 410h1M201 410h1M205 410h1M209 410h1M213 410h1M217 410h1M221 410h1M225 410h1M229 410h1M233 410h1M237 410h1M241 410h1M245 410h1M249 410h1M253 410h1M257 410h1M261 410h1M265 410h1M269 410h1M273 410h1M277 410h1M281 410h1M285 410h1M289 410h1M293 410h1M297 410h1M301 410h1M305 410h1M309 410h1M313 410h1M317 410h1M321 410h1M325 410h1M329 410h1M333 410h1M337 410h1M341 410h1M345 410h1M349 410h1M353 410h1M357 410h1M361 410h1M365 410h1M369 410h1M373 410h1M377 410h1M381 410h1M385 410h1M389 410h1M393 410h1M397 410h1M401 410h1M405 410h1M409 410h1M413 410h1M417 410h1M421 410h1M425 410h1M429 410h1M433 410h1M437 410h1M441 410h1M445 410h1M449 410h1M453 410h1M457 410h1M461 410h1M465 410h1M469 410h1M473 410h1M477 410h1M481 410h1M485 410h1M489 410h1M493 410h1M497 410h1M501 410h1M505 410h1M509 410h1M513 410h1M517 410h1M521 410h1M525 410h1M529 410h1M533 410h1M537 410h1M541 410h1M545 410h1M549 410h1M553 410h1M557 410h1M561 410h1M565 410h1M569 410h1M573 410h1M577 410h1M581 410h1M585 410h1M589 410h1M593 410h1M597 410h1M601 410h1M605 410h1M609 410h1M613 410h1M617 410h1M621 410h1M625 410h1M629 410h1M633 410h1M637 410h1M641 410h1M645 410h1M649 410h1M653 410h1M657 410h1M661 410h1M665 410h1M669 410h1M673 410h1M677 410h1M681 410h1M685 410h1M689 410h1M693 410h1M697 410h1M701 410h1M705 410h1M709 410h1M713 410h1M717 410h1M721 410h1M725 410h1M729 410h1M733 410h1M737 410h1M741 410h1M745 410h1M749 410h1M753 410h1M757 410h1M761 410h1M765 410h1M769 410h1M773 410h1M777 410h1M781 410h1M785 410h1M789 410h1M793 410h1M797 410h1M801 410h1M805 410h1M809 410h1M813 410h1M817 410h1M821 410h1M825 410h1M829 410h1M833 410h1M837 410h1M841 410h1M845 410h1M849 410h1M853 410h1M857 410h1M861 410h1M865 410h1M869 410h1M873 410h1M877 410h1M881 410h1M885 410h1M889 410h1M893 410h1M897 410h1M901 410h1M905 410h1M909 410h1M913 410h1M917 410h1M921 410h1M925 410h1M929 410h1M933 410h1M937 410h1M941 410h1M945 410h1M949 410h1M953 410h1M957 410h1M961 410h1M965 410h1M969 410h1M973 410h1M977 410h1M981 410h1M985 410h1M989 410h1M993 410h1M997 410h1M1001 410h1M1005 410h1M1009 410h1M1013 410h1M1017 410h1M1021 410h1M1025 410h1M1029 410h1M9 442h1M13 442h1M17 442h1M21 442h1M25 442h1M29 442h1M33 442h1M37 442h1M41 442h1M45 442h1M49 442h1M53 442h1M57 442h1M61 442h1M65 442h1M69 442h1M73 442h1M77 442h1M81 442h1M85 442h1M89 442h1M93 442h1M97 442h1M101 442h1M105 442h1M109 442h1M113 442h1M117 442h1M121 442h1M125 442h1M129 442h1M133 442h1M137 442h1M141 442h1M145 442h1M149 442h1M153 442h1M157 442h1M161 442h1M165 442h1M169 442h1M173 442h1M177 442h1M181 442h1M185 442h1M189 442h1M193 442h1M197 442h1M201 442h1M205 442h1M209 442h1M213 442h1M217 442h1M221 442h1M225 442h1M229 442h1M233 442h1M237 442h1M241 442h1M245 442h1M249 442h1M253 442h1M257 442h1M261 442h1M265 442h1M269 442h1M273 442h1M277 442h1M281 442h1M285 442h1M289 442h1M293 442h1M297 442h1M301 442h1M305 442h1M309 442h1M313 442h1M317 442h1M321 442h1M325 442h1M329 442h1M333 442h1M337 442h1M341 442h1M345 442h1M349 442h1M353 442h1M357 442h1M361 442h1M365 442h1M369 442h1M373 442h1M377 442h1M381 442h1M385 442h1M389 442h1M393 442h1M397 442h1M401 442h1M405 442h1M409 442h1M413 442h1M417 442h1M421 442h1M425 442h1M429 442h1M433 442h1M437 442h1M441 442h1M445 442h1M449 442h1M453 442h1M457 442h1M461 442h1M465 442h1M469 442h1M473 442h1M477 442h1M481 442h1M485 442h1M489 442h1M493 442h1M497 442h1M501 442h1M505 442h1M509 442h1M513 442h1M517 442h1M521 442h1M525 442h1M529 442h1M533 442h1M537 442h1M541 442h1M545 442h1M549 442h1M553 442h1M557 442h1M561 442h1M565 442h1M569 442h1M573 442h1M577 442h1M581 442h1M585 442h1M589 442h1M593 442h1M597 442h1M601 442h1M605 442h1M609 442h1M613 442h1M617 442h1M621 442h1M625 442h1M629 442h1M633 442h1M637 442h1M641 442h1M645 442h1M649 442h1M653 442h1M657 442h1M661 442h1M665 442h1M669 442h1M673 442h1M677 442h1M681 442h1M685 442h1M689 442h1M693 442h1M697 442h1M701 442h1M705 442h1M709 442h1M713 442h1M717 442h1M721 442h1M725 442h1M729 442h1M733 442h1M737 442h1M741 442h1M745 442h1M749 442h1M753 442h1M757 442h1M761 442h1M765 442h1M769 442h1M773 442h1M777 442h1M781 442h1M785 442h1M789 442h1M793 442h1M797 442h1M801 442h1M805 442h1M809 442h1M813 442h1M817 442h1M821 442h1M825 442h1M829 442h1M833 442h1M837 442h1M841 442h1M845 442h1M849 442h1M853 442h1M857 442h1M861 442h1M865 442h1M869 442h1M873 442h1M877 442h1M881 442h1M885 442h1M889 442h1M893 442h1M897 442h1M901 442h1M905 442h1M909 442h1M913 442h1M917 442h1M921 442h1M925 442h1M929 442h1M933 442h1M937 442h1M941 442h1M945 442h1M949 442h1M953 442h1M957 442h1M961 442h1M965 442h1M969 442h1M973 442h1M977 442h1M981 442h1M985 442h1M989 442h1M993 442h1M997 442h1M1001 442h1M1005 442h1M1009 442h1M1013 442h1M1017 442h1M1021 442h1M1025 442h1M1029 442h1M9 473h1M13 473h1M17 473h1M21 473h1M25 473h1M29 473h1M33 473h1M37 473h1M41 473h1M45 473h1M49 473h1M53 473h1M57 473h1M61 473h1M65 473h1M69 473h1M73 473h1M77 473h1M81 473h1M85 473h1M89 473h1M93 473h1M97 473h1M101 473h1M105 473h1M109 473h1M113 473h1M117 473h1M121 473h1M125 473h1M129 473h1M133 473h1M137 473h1M141 473h1M145 473h1M149 473h1M153 473h1M157 473h1M161 473h1M165 473h1M169 473h1M173 473h1M177 473h1M181 473h1M185 473h1M189 473h1M193 473h1M197 473h1M201 473h1M205 473h1M209 473h1M213 473h1M217 473h1M221 473h1M225 473h1M229 473h1M233 473h1M237 473h1M241 473h1M245 473h1M249 473h1M253 473h1M257 473h1M261 473h1M265 473h1M269 473h1M273 473h1M277 473h1M281 473h1M285 473h1M289 473h1M293 473h1M297 473h1M301 473h1M305 473h1M309 473h1M313 473h1M317 473h1M321 473h1M325 473h1M329 473h1M333 473h1M337 473h1M341 473h1M345 473h1M349 473h1M353 473h1M357 473h1M361 473h1M365 473h1M369 473h1M373 473h1M377 473h1M381 473h1M385 473h1M389 473h1M393 473h1M397 473h1M401 473h1M405 473h1M409 473h1M413 473h1M417 473h1M421 473h1M425 473h1M429 473h1M433 473h1M437 473h1M441 473h1M445 473h1M449 473h1M453 473h1M457 473h1M461 473h1M465 473h1M469 473h1M473 473h1M477 473h1M481 473h1M485 473h1M489 473h1M493 473h1M497 473h1M501 473h1M505 473h1M509 473h1M513 473h1M517 473h1M521 473h1M525 473h1M529 473h1M533 473h1M537 473h1M541 473h1M545 473h1M549 473h1M553 473h1M557 473h1M561 473h1M565 473h1M569 473h1M573 473h1M577 473h1M581 473h1M585 473h1M589 473h1M593 473h1M597 473h1M601 473h1M605 473h1M609 473h1M613 473h1M617 473h1M621 473h1M625 473h1M629 473h1M633 473h1M637 473h1M641 473h1M645 473h1M649 473h1M653 473h1M657 473h1M661 473h1M665 473h1M669 473h1M673 473h1M677 473h1M681 473h1M685 473h1M689 473h1M693 473h1M697 473h1M701 473h1M705 473h1M709 473h1M713 473h1M717 473h1M721 473h1M725 473h1M729 473h1M733 473h1M737 473h1M741 473h1M745 473h1M749 473h1M753 473h1M757 473h1M761 473h1M765 473h1M769 473h1M773 473h1M777 473h1M781 473h1M785 473h1M789 473h1M793 473h1M797 473h1M801 473h1M805 473h1M809 473h1M813 473h1M817 473h1M821 473h1M825 473h1M829 473h1M833 473h1M837 473h1M841 473h1M845 473h1M849 473h1M853 473h1M857 473h1M861 473h1M865 473h1M869 473h1M873 473h1M877 473h1M881 473h1M885 473h1M889 473h1M893 473h1M897 473h1M901 473h1M905 473h1M909 473h1M913 473h1M917 473h1M921 473h1M925 473h1M929 473h1M933 473h1M937 473h1M941 473h1M945 473h1M949 473h1M953 473h1M957 473h1M961 473h1M965 473h1M969 473h1M973 473h1M977 473h1M981 473h1M985 473h1M989 473h1M993 473h1M997 473h1M1001 473h1M1005 473h1M1009 473h1M1013 473h1M1017 473h1M1021 473h1M1025 473h1M1029 473h1M9 504h1M13 504h1M17 504h1M21 504h1M25 504h1M29 504h1M33 504h1M37 504h1M41 504h1M45 504h1M49 504h1M53 504h1M57 504h1M61 504h1M65 504h1M69 504h1M73 504h1M77 504h1M81 504h1M85 504h1M89 504h1M93 504h1M97 504h1M101 504h1M105 504h1M109 504h1M113 504h1M117 504h1M121 504h1M125 504h1M129 504h1M133 504h1M137 504h1M141 504h1M145 504h1M149 504h1M153 504h1M157 504h1M161 504h1M165 504h1M169 504h1M173 504h1M177 504h1M181 504h1M185 504h1M189 504h1M193 504h1M197 504h1M201 504h1M205 504h1M209 504h1M213 504h1M217 504h1M221 504h1M225 504h1M229 504h1M233 504h1M237 504h1M241 504h1M245 504h1M249 504h1M253 504h1M257 504h1M261 504h1M265 504h1M269 504h1M273 504h1M277 504h1M281 504h1M285 504h1M289 504h1M293 504h1M297 504h1M301 504h1M305 504h1M309 504h1M313 504h1M317 504h1M321 504h1M325 504h1M329 504h1M333 504h1M337 504h1M341 504h1M345 504h1M349 504h1M353 504h1M357 504h1M361 504h1M365 504h1M369 504h1M373 504h1M377 504h1M381 504h1M385 504h1M389 504h1M393 504h1M397 504h1M401 504h1M405 504h1M409 504h1M413 504h1M417 504h1M421 504h1M425 504h1M429 504h1M433 504h1M437 504h1M441 504h1M445 504h1M449 504h1M453 504h1M457 504h1M461 504h1M465 504h1M469 504h1M473 504h1M477 504h1M481 504h1M485 504h1M489 504h1M493 504h1M497 504h1M501 504h1M505 504h1M509 504h1M513 504h1M517 504h1M521 504h1M525 504h1M529 504h1M533 504h1M537 504h1M541 504h1M545 504h1M549 504h1M553 504h1M557 504h1M561 504h1M565 504h1M569 504h1M573 504h1M577 504h1M581 504h1M585 504h1M589 504h1M593 504h1M597 504h1M601 504h1M605 504h1M609 504h1M613 504h1M617 504h1M621 504h1M625 504h1M629 504h1M633 504h1M637 504h1M641 504h1M645 504h1M649 504h1M653 504h1M657 504h1M661 504h1M665 504h1M669 504h1M673 504h1M677 504h1M681 504h1M685 504h1M689 504h1M693 504h1M697 504h1M701 504h1M705 504h1M709 504h1M713 504h1M717 504h1M721 504h1M725 504h1M729 504h1M733 504h1M737 504h1M741 504h1M745 504h1M749 504h1M753 504h1M757 504h1M761 504h1M765 504h1M769 504h1M773 504h1M777 504h1M781 504h1M785 504h1M789 504h1M793 504h1M797 504h1M801 504h1M805 504h1M809 504h1M813 504h1M817 504h1M821 504h1M825 504h1M829 504h1M833 504h1M837 504h1M841 504h1M845 504h1M849 504h1M853 504h1M857 504h1M861 504h1M865 504h1M869 504h1M873 504h1M877 504h1M881 504h1M885 504h1M889 504h1M893 504h1M897 504h1M901 504h1M905 504h1M909 504h1M913 504h1M917 504h1M921 504h1M925 504h1M929 504h1M933 504h1M937 504h1M941 504h1M945 504h1M949 504h1M953 504h1M957 504h1M961 504h1M965 504h1M969 504h1M973 504h1M977 504h1M981 504h1M985 504h1M989 504h1M993 504h1M997 504h1M1001 504h1M1005 504h1M1009 504h1M1013 504h1M1017 504h1M1021 504h1M1025 504h1M1029 504h1M9 536h1M13 536h1M17 536h1M21 536h1M25 536h1M29 536h1M33 536h1M37 536h1M41 536h1M45 536h1M49 536h1M53 536h1M57 536h1M61 536h1M65 536h1M69 536h1M73 536h1M77 536h1M81 536h1M85 536h1M89 536h1M93 536h1M97 536h1M101 536h1M105 536h1M109 536h1M113 536h1M117 536h1M121 536h1M125 536h1M129 536h1M133 536h1M137 536h1M141 536h1M145 536h1M149 536h1M153 536h1M157 536h1M161 536h1M165 536h1M169 536h1M173 536h1M177 536h1M181 536h1M185 536h1M189 536h1M193 536h1M197 536h1M201 536h1M205 536h1M209 536h1M213 536h1M217 536h1M221 536h1M225 536h1M229 536h1M233 536h1M237 536h1M241 536h1M245 536h1M249 536h1M253 536h1M257 536h1M261 536h1M265 536h1M269 536h1M273 536h1M277 536h1M281 536h1M285 536h1M289 536h1M293 536h1M297 536h1M301 536h1M305 536h1M309 536h1M313 536h1M317 536h1M321 536h1M325 536h1M329 536h1M333 536h1M337 536h1M341 536h1M345 536h1M349 536h1M353 536h1M357 536h1M361 536h1M365 536h1M369 536h1M373 536h1M377 536h1M381 536h1M385 536h1M389 536h1M393 536h1M397 536h1M401 536h1M405 536h1M409 536h1M413 536h1M417 536h1M421 536h1M425 536h1M429 536h1M433 536h1M437 536h1M441 536h1M445 536h1M449 536h1M453 536h1M457 536h1M461 536h1M465 536h1M469 536h1M473 536h1M477 536h1M481 536h1M485 536h1M489 536h1M493 536h1M497 536h1M501 536h1M505 536h1M509 536h1M513 536h1M517 536h1M521 536h1M525 536h1M529 536h1M533 536h1M537 536h1M541 536h1M545 536h1M549 536h1M553 536h1M557 536h1M561 536h1M565 536h1M569 536h1M573 536h1M577 536h1M581 536h1M585 536h1M589 536h1M593 536h1M597 536h1M601 536h1M605 536h1M609 536h1M613 536h1M617 536h1M621 536h1M625 536h1M629 536h1M633 536h1M637 536h1M641 536h1M645 536h1M649 536h1M653 536h1M657 536h1M661 536h1M665 536h1M669 536h1M673 536h1M677 536h1M681 536h1M685 536h1M689 536h1M693 536h1M697 536h1M701 536h1M705 536h1M709 536h1M713 536h1M717 536h1M721 536h1M725 536h1M729 536h1M733 536h1M737 536h1M741 536h1M745 536h1M749 536h1M753 536h1M757 536h1M761 536h1M765 536h1M769 536h1M773 536h1M777 536h1M781 536h1M785 536h1M789 536h1M793 536h1M797 536h1M801 536h1M805 536h1M809 536h1M813 536h1M817 536h1M821 536h1M825 536h1M829 536h1M833 536h1M837 536h1M841 536h1M845 536h1M849 536h1M853 536h1M857 536h1M861 536h1M865 536h1M869 536h1M873 536h1M877 536h1M881 536h1M885 536h1M889 536h1M893 536h1M897 536h1M901 536h1M905 536h1M909 536h1M913 536h1M917 536h1M921 536h1M925 536h1M929 536h1M933 536h1M937 536h1M941 536h1M945 536h1M949 536h1M953 536h1M957 536h1M961 536h1M965 536h1M969 536h1M973 536h1M977 536h1M981 536h1M985 536h1M989 536h1M993 536h1M997 536h1M1001 536h1M1005 536h1M1009 536h1M1013 536h1M1017 536h1M1021 536h1M1025 536h1M1029 536h1M175 21h1M175 25h1M175 29h1M175 33h1M175 37h1M175 41h1M175 45h1M175 49h1M175 53h1M175 57h1M175 61h1M175 65h1M175 69h1M175 73h1M175 77h1M175 81h1M175 85h1M175 89h1M175 93h1M175 97h1M175 101h1M175 105h1M175 109h1M175 113h1M175 117h1M175 121h1M175 125h1M175 129h1M175 133h1M175 137h1M175 141h1M175 145h1M175 149h1M175 153h1M175 157h1M175 161h1M175 165h1M175 169h1M175 173h1M175 177h1M175 181h1M175 185h1M175 189h1M175 193h1M175 197h1M175 201h1M175 205h1M175 209h1M175 213h1M175 217h1M175 221h1M175 225h1M175 229h1M175 233h1M175 237h1M175 241h1M175 245h1M175 249h1M175 253h1M175 257h1M175 261h1M175 265h1M175 269h1M175 273h1M175 277h1M175 281h1M175 285h1M175 289h1M175 293h1M175 297h1M175 301h1M175 305h1M175 309h1M175 313h1M175 317h1M175 321h1M175 325h1M175 329h1M175 333h1M175 337h1M175 341h1M175 377h1M175 381h1M175 385h1M175 389h1M175 393h1M175 397h1M175 401h1M175 405h1M175 409h1M175 413h1M175 417h1M175 421h1M175 425h1M175 429h1M175 433h1M175 437h1M175 441h1M175 445h1M175 449h1M175 453h1M175 457h1M175 461h1M175 465h1M175 469h1M175 473h1M175 477h1M175 481h1M175 485h1M175 489h1M175 493h1M175 497h1M175 501h1M175 505h1M175 509h1M175 513h1M175 517h1M175 521h1M175 525h1M175 529h1M175 533h1M175 537h1M175 541h1M175 545h1M175 549h1M175 553h1M175 557h1M175 561h1M175 565h1M175 569h1M175 573h1M355 21h1M355 25h1M355 29h1M355 33h1M355 37h1M355 41h1M355 45h1M355 49h1M355 53h1M355 57h1M355 61h1M355 65h1M355 69h1M355 73h1M355 77h1M355 81h1M355 85h1M355 89h1M355 93h1M355 97h1M355 101h1M355 105h1M355 109h1M355 113h1M355 117h1M355 121h1M355 125h1M355 129h1M355 133h1M355 137h1M355 141h1M355 145h1M355 149h1M355 153h1M355 157h1M355 161h1M355 165h1M355 169h1M355 173h1M355 177h1M355 181h1M355 185h1M355 189h1M355 193h1M355 197h1M355 201h1M355 205h1M355 209h1M355 213h1M355 217h1M355 221h1M355 225h1M355 229h1M355 233h1M355 237h1M355 241h1M355 245h1M355 249h1M355 253h1M355 257h1M355 261h1M355 265h1M355 269h1M355 273h1M355 277h1M355 281h1M355 285h1M355 289h1M355 293h1M355 297h1M355 301h1M355 305h1M355 309h1M355 313h1M355 317h1M355 321h1M355 325h1M355 329h1M355 333h1M355 337h1M355 341h1M355 377h1M355 381h1M355 385h1M355 389h1M355 393h1M355 397h1M355 401h1M355 405h1M355 409h1M355 413h1M355 417h1M355 421h1M355 425h1M355 429h1M355 433h1M355 437h1M355 441h1M355 445h1M355 449h1M355 453h1M355 457h1M355 461h1M355 465h1M355 469h1M355 473h1M355 477h1M355 481h1M355 485h1M355 489h1M355 493h1M355 497h1M355 501h1M355 505h1M355 509h1M355 513h1M355 517h1M355 521h1M355 525h1M355 529h1M355 533h1M355 537h1M355 541h1M355 545h1M355 549h1M355 553h1M355 557h1M355 561h1M355 565h1M355 569h1M355 573h1M519 21h1M519 25h1M519 29h1M519 33h1M519 37h1M519 41h1M519 45h1M519 49h1M519 53h1M519 57h1M519 61h1M519 65h1M519 69h1M519 73h1M519 77h1M519 81h1M519 85h1M519 89h1M519 93h1M519 97h1M519 101h1M519 105h1M519 109h1M519 113h1M519 117h1M519 121h1M519 125h1M519 129h1M519 133h1M519 137h1M519 141h1M519 145h1M519 149h1M519 153h1M519 157h1M519 161h1M519 165h1M519 169h1M519 173h1M519 177h1M519 181h1M519 185h1M519 189h1M519 193h1M519 197h1M519 201h1M519 205h1M519 209h1M519 213h1M519 217h1M519 221h1M519 225h1M519 229h1M519 233h1M519 237h1M519 241h1M519 245h1M519 249h1M519 253h1M519 257h1M519 261h1M519 265h1M519 269h1M519 273h1M519 277h1M519 281h1M519 285h1M519 289h1M519 293h1M519 297h1M519 301h1M519 305h1M519 309h1M519 313h1M519 317h1M519 321h1M519 325h1M519 329h1M519 333h1M519 337h1M519 341h1M519 377h1M519 381h1M519 385h1M519 389h1M519 393h1M519 397h1M519 401h1M519 405h1M519 409h1M519 413h1M519 417h1M519 421h1M519 425h1M519 429h1M519 433h1M519 437h1M519 441h1M519 445h1M519 449h1M519 453h1M519 457h1M519 461h1M519 465h1M519 469h1M519 473h1M519 477h1M519 481h1M519 485h1M519 489h1M519 493h1M519 497h1M519 501h1M519 505h1M519 509h1M519 513h1M519 517h1M519 521h1M519 525h1M519 529h1M519 533h1M519 537h1M519 541h1M519 545h1M519 549h1M519 553h1M519 557h1M519 561h1M519 565h1M519 569h1M519 573h1M690 21h1M690 25h1M690 29h1M690 33h1M690 37h1M690 41h1M690 45h1M690 49h1M690 53h1M690 57h1M690 61h1M690 65h1M690 69h1M690 73h1M690 77h1M690 81h1M690 85h1M690 89h1M690 93h1M690 97h1M690 101h1M690 105h1M690 109h1M690 113h1M690 117h1M690 121h1M690 125h1M690 129h1M690 133h1M690 137h1M690 141h1M690 145h1M690 149h1M690 153h1M690 157h1M690 161h1M690 165h1M690 169h1M690 173h1M690 177h1M690 181h1M690 185h1M690 189h1M690 193h1M690 197h1M690 201h1M690 205h1M690 209h1M690 213h1M690 217h1M690 221h1M690 225h1M690 229h1M690 233h1M690 237h1M690 241h1M690 245h1M690 249h1M690 253h1M690 257h1M690 261h1M690 265h1M690 269h1M690 273h1M690 277h1M690 281h1M690 285h1M690 289h1M690 293h1M690 297h1M690 301h1M690 305h1M690 309h1M690 313h1M690 317h1M690 321h1M690 325h1M690 329h1M690 333h1M690 337h1M690 341h1M690 377h1M690 381h1M690 385h1M690 389h1M690 393h1M690 397h1M690 401h1M690 405h1M690 409h1M690 413h1M690 417h1M690 421h1M690 425h1M690 429h1M690 433h1M690 437h1M690 441h1M690 445h1M690 449h1M690 453h1M690 457h1M690 461h1M690 465h1M690 469h1M690 473h1M690 477h1M690 481h1M690 485h1M690 489h1M690 493h1M690 497h1M690 501h1M690 505h1M690 509h1M690 513h1M690 517h1M690 521h1M690 525h1M690 529h1M690 533h1M690 537h1M690 541h1M690 545h1M690 549h1M690 553h1M690 557h1M690 561h1M690 565h1M690 569h1M690 573h1M823 21h1M823 25h1M823 29h1M823 33h1M823 37h1M823 41h1M823 45h1M823 49h1M823 53h1M823 57h1M823 61h1M823 65h1M823 69h1M823 73h1M823 77h1M823 81h1M823 85h1M823 89h1M823 93h1M823 97h1M823 101h1M823 105h1M823 109h1M823 113h1M823 117h1M823 121h1M823 125h1M823 129h1M823 133h1M823 137h1M823 141h1M823 145h1M823 149h1M823 153h1M823 157h1M823 161h1M823 165h1M823 169h1M823 173h1M823 177h1M823 181h1M823 185h1M823 189h1M823 193h1M823 197h1M823 201h1M823 205h1M823 209h1M823 213h1M823 217h1M823 221h1M823 225h1M823 229h1M823 233h1M823 237h1M823 241h1M823 245h1M823 249h1M823 253h1M823 257h1M823 261h1M823 265h1M823 269h1M823 273h1M823 277h1M823 281h1M823 285h1M823 289h1M823 293h1M823 297h1M823 301h1M823 305h1M823 309h1M823 313h1M823 317h1M823 321h1M823 325h1M823 329h1M823 333h1M823 337h1M823 341h1M823 377h1M823 381h1M823 385h1M823 389h1M823 393h1M823 397h1M823 401h1M823 405h1M823 409h1M823 413h1M823 417h1M823 421h1M823 425h1M823 429h1M823 433h1M823 437h1M823 441h1M823 445h1M823 449h1M823 453h1M823 457h1M823 461h1M823 465h1M823 469h1M823 473h1M823 477h1M823 481h1M823 485h1M823 489h1M823 493h1M823 497h1M823 501h1M823 505h1M823 509h1M823 513h1M823 517h1M823 521h1M823 525h1M823 529h1M823 533h1M823 537h1M823 541h1M823 545h1M823 549h1M823 553h1M823 557h1M823 561h1M823 565h1M823 569h1M823 573h1M979 21h1M979 25h1M979 29h1M979 33h1M979 37h1M979 41h1M979 45h1M979 49h1M979 53h1M979 57h1M979 61h1M979 65h1M979 69h1M979 73h1M979 77h1M979 81h1M979 85h1M979 89h1M979 93h1M979 97h1M979 101h1M979 105h1M979 109h1M979 113h1M979 117h1M979 121h1M979 125h1M979 129h1M979 133h1M979 137h1M979 141h1M979 145h1M979 149h1M979 153h1M979 157h1M979 161h1M979 165h1M979 169h1M979 173h1M979 177h1M979 181h1M979 185h1M979 189h1M979 193h1M979 197h1M979 201h1M979 205h1M979 209h1M979 213h1M979 217h1M979 221h1M979 225h1M979 229h1M979 233h1M979 237h1M979 241h1M979 245h1M979 249h1M979 253h1M979 257h1M979 261h1M979 265h1M979 269h1M979 273h1M979 277h1M979 281h1M979 285h1M979 289h1M979 293h1M979 297h1M979 301h1M979 305h1M979 309h1M979 313h1M979 317h1M979 321h1M979 325h1M979 329h1M979 333h1M979 337h1M979 341h1M979 377h1M979 381h1M979 385h1M979 389h1M979 393h1M979 397h1M979 401h1M979 405h1M979 409h1M979 413h1M979 417h1M979 421h1M979 425h1M979 429h1M979 433h1M979 437h1M979 441h1M979 445h1M979 449h1M979 453h1M979 457h1M979 461h1M979 465h1M979 469h1M979 473h1M979 477h1M979 481h1M979 485h1M979 489h1M979 493h1M979 497h1M979 501h1M979 505h1M979 509h1M979 513h1M979 517h1M979 521h1M979 525h1M979 529h1M979 533h1M979 537h1M979 541h1M979 545h1M979 549h1M979 553h1M979 557h1M979 561h1M979 565h1M979 569h1M979 573h1" stroke="#c00000" stroke-width="1" fill="none" transform="translate(0 0.5)"/>
<rect x="7" y="1" width="1" height="577" fill="#c00000"/>
<rect x="7" y="357" width="1025" height="1" fill="#c00000"/>
<rect x="7" y="575" width="1025" height="1" fill="#c00000"/>
<!--SIDEBAR-->
<clipPath id="sb"><rect x="0" y="1" width="7" height="356"/></clipPath>
<rect x="0" y="59" width="8" height="61" fill="#c00000"/>
<rect x="0" y="179" width="8" height="1" fill="#c00000"/>
<rect x="0" y="228" width="8" height="1" fill="#c00000"/>
<rect x="0" y="287" width="8" height="1" fill="#c00000"/>
<rect x="0" y="347" width="8" height="1" fill="#c00000"/>
<g clip-path="url(#sb)" opacity="0.999">
<text class="cjk" x="-6.5" y="13.56" font-size="12" fill="#d8d8d8">分</text>
<text class="cjk" x="-6.5" y="26.56" font-size="12" fill="#d8d8d8">时</text>
<text class="cjk" x="-6.5" y="39.56" font-size="12" fill="#d8d8d8">走</text>
<text class="cjk" x="-6.5" y="52.56" font-size="12" fill="#d8d8d8">势</text>
<text class="cjk" x="-6.5" y="76.06" font-size="12" fill="#ffffff">技</text>
<text class="cjk" x="-6.5" y="89.06" font-size="12" fill="#ffffff">术</text>
<text class="cjk" x="-6.5" y="102.06" font-size="12" fill="#ffffff">分</text>
<text class="cjk" x="-6.5" y="115.06" font-size="12" fill="#ffffff">析</text>
<text class="cjk" x="-6.5" y="135.06" font-size="12" fill="#d8d8d8">成</text>
<text class="cjk" x="-6.5" y="147.56" font-size="12" fill="#d8d8d8">交</text>
<text class="cjk" x="-6.5" y="160.06" font-size="12" fill="#d8d8d8">明</text>
<text class="cjk" x="-6.5" y="172.56" font-size="12" fill="#d8d8d8">细</text>
<text class="cjk" x="-6.5" y="196.56" font-size="12" fill="#d8d8d8">分</text>
<text class="cjk" x="-6.5" y="209.56" font-size="12" fill="#d8d8d8">价</text>
<text class="cjk" x="-6.5" y="222.56" font-size="12" fill="#d8d8d8">表</text>
<text class="cjk" x="-6.5" y="243.56" font-size="12" fill="#d8d8d8">基</text>
<text class="cjk" x="-6.5" y="256.56" font-size="12" fill="#d8d8d8">本</text>
<text class="cjk" x="-6.5" y="269.56" font-size="12" fill="#d8d8d8">资</text>
<text class="cjk" x="-6.5" y="282.56" font-size="12" fill="#d8d8d8">料</text>
<text class="cjk" x="-6.5" y="303.56" font-size="12" fill="#d8d8d8">个</text>
<text class="cjk" x="-6.5" y="316.56" font-size="12" fill="#d8d8d8">股</text>
<text class="cjk" x="-6.5" y="329.56" font-size="12" fill="#d8d8d8">资</text>
<text class="cjk" x="-6.5" y="342.56" font-size="12" fill="#d8d8d8">讯</text>
</g>
<rect x="9" y="18" width="3" height="3" fill="#ff00ff"/>
<rect x="25" y="18" width="3" height="3" fill="#ff00ff"/>
<rect x="64" y="18" width="3" height="3" fill="#ff00ff"/>
<rect x="80" y="18" width="3" height="3" fill="#ff00ff"/>
<rect x="119" y="18" width="3" height="3" fill="#ff00ff"/>
<rect x="158" y="18" width="3" height="3" fill="#ff00ff"/>
<rect x="173" y="18" width="3" height="3" fill="#ff00ff"/>
<rect x="244" y="18" width="3" height="3" fill="#ff00ff"/>
<rect x="353" y="18" width="3" height="3" fill="#ff00ff"/>
<rect x="446" y="18" width="3" height="3" fill="#ff00ff"/>
<rect x="485" y="18" width="3" height="3" fill="#ff00ff"/>
<rect x="493" y="18" width="3" height="3" fill="#ff00ff"/>
<rect x="524" y="18" width="3" height="3" fill="#ff00ff"/>
<rect x="587" y="18" width="3" height="3" fill="#ff00ff"/>
<rect x="681" y="18" width="3" height="3" fill="#ff00ff"/>
<rect x="712" y="18" width="3" height="3" fill="#ff00ff"/>
<rect x="774" y="18" width="3" height="3" fill="#ff00ff"/>
<rect x="782" y="18" width="3" height="3" fill="#ff00ff"/>
<rect x="813" y="18" width="3" height="3" fill="#ff00ff"/>
<rect x="868" y="18" width="3" height="3" fill="#ff00ff"/>
<rect x="876" y="18" width="3" height="3" fill="#ff00ff"/>
<rect x="930" y="18" width="3" height="3" fill="#ff00ff"/>
<rect x="977" y="18" width="3" height="3" fill="#ff00ff"/>
<g shape-rendering="crispEdges">
<rect x="11" y="277" width="1" height="22" fill="#54ffff"/>
<rect x="9" y="277" width="5" height="15" fill="#54ffff"/>
<rect x="19" y="291" width="1" height="1" fill="#ff3232"/>
<rect x="19" y="296" width="1" height="6" fill="#ff3232"/>
<path d="M17 292h5v4h-5zM18 293h3v2h-3z" fill="#ff3232" fill-rule="evenodd"/>
<path d="M25 288h5v8h-5zM26 289h3v6h-3z" fill="#ff3232" fill-rule="evenodd"/>
<rect x="35" y="275" width="1" height="7" fill="#ff3232"/>
<rect x="35" y="289" width="1" height="10" fill="#ff3232"/>
<path d="M33 282h5v7h-5zM34 283h3v5h-3z" fill="#ff3232" fill-rule="evenodd"/>
<rect x="43" y="267" width="1" height="7" fill="#ff3232"/>
<path d="M41 274h5v10h-5zM42 275h3v8h-3z" fill="#ff3232" fill-rule="evenodd"/>
<rect x="50" y="266" width="1" height="19" fill="#54ffff"/>
<rect x="48" y="270" width="5" height="4" fill="#54ffff"/>
<rect x="58" y="270" width="1" height="25" fill="#54ffff"/>
<rect x="56" y="274" width="5" height="6" fill="#54ffff"/>
<rect x="66" y="275" width="1" height="6" fill="#ff3232"/>
<rect x="66" y="285" width="1" height="3" fill="#ff3232"/>
<path d="M64 281h5v4h-5zM65 282h3v2h-3z" fill="#ff3232" fill-rule="evenodd"/>
<rect x="74" y="280" width="1" height="15" fill="#54ffff"/>
<rect x="72" y="286" width="5" height="5" fill="#54ffff"/>
<rect x="82" y="288" width="1" height="18" fill="#54ffff"/>
<rect x="80" y="292" width="5" height="14" fill="#54ffff"/>
<path d="M87 303h5v8h-5zM88 304h3v6h-3z" fill="#ff3232" fill-rule="evenodd"/>
<rect x="97" y="282" width="1" height="3" fill="#ff3232"/>
<rect x="97" y="307" width="1" height="3" fill="#ff3232"/>
<path d="M95 285h5v22h-5zM96 286h3v20h-3z" fill="#ff3232" fill-rule="evenodd"/>
<rect x="105" y="295" width="1" height="11" fill="#54ffff"/>
<rect x="103" y="295" width="5" height="8" fill="#54ffff"/>
<rect x="113" y="305" width="1" height="23" fill="#54ffff"/>
<rect x="111" y="306" width="5" height="18" fill="#54ffff"/>
<rect x="121" y="306" width="1" height="22" fill="#54ffff"/>
<rect x="119" y="321" width="5" height="3" fill="#54ffff"/>
<rect x="128" y="331" width="1" height="8" fill="#ff3232"/>
<path d="M126 317h5v14h-5zM127 318h3v12h-3z" fill="#ff3232" fill-rule="evenodd"/>
<rect x="136" y="300" width="1" height="6" fill="#ff3232"/>
<path d="M134 306h5v16h-5zM135 307h3v14h-3z" fill="#ff3232" fill-rule="evenodd"/>
<path d="M142 292h5v18h-5zM143 293h3v16h-3z" fill="#ff3232" fill-rule="evenodd"/>
<rect x="152" y="285" width="1" height="18" fill="#54ffff"/>
<rect x="150" y="295" width="5" height="3" fill="#54ffff"/>
<rect x="160" y="289" width="1" height="10" fill="#ff3232"/>
<path d="M158 299h5v5h-5zM159 300h3v3h-3z" fill="#ff3232" fill-rule="evenodd"/>
<rect x="167" y="296" width="1" height="2" fill="#ff3232"/>
<rect x="167" y="302" width="1" height="1" fill="#ff3232"/>
<path d="M165 298h5v4h-5zM166 299h3v2h-3z" fill="#ff3232" fill-rule="evenodd"/>
<rect x="175" y="295" width="1" height="11" fill="#54ffff"/>
<rect x="173" y="296" width="5" height="3" fill="#54ffff"/>
<rect x="183" y="288" width="1" height="17" fill="#fff"/>
<rect x="181" y="299" width="4" height="1" fill="#fff"/>
<rect x="191" y="286" width="1" height="7" fill="#ff3232"/>
<rect x="191" y="296" width="1" height="3" fill="#ff3232"/>
<path d="M189 293h5v3h-5zM190 294h3v1h-3z" fill="#ff3232" fill-rule="evenodd"/>
<rect x="199" y="285" width="1" height="13" fill="#54ffff"/>
<rect x="197" y="291" width="5" height="7" fill="#54ffff"/>
<rect x="207" y="299" width="1" height="4" fill="#ff3232"/>
<path d="M205 277h5v22h-5zM206 278h3v20h-3z" fill="#ff3232" fill-rule="evenodd"/>
<rect x="214" y="260" width="1" height="14" fill="#ff3232"/>
<rect x="214" y="278" width="1" height="10" fill="#ff3232"/>
<path d="M212 274h5v4h-5zM213 275h3v2h-3z" fill="#ff3232" fill-rule="evenodd"/>
<rect x="222" y="266" width="1" height="15" fill="#fff"/>
<rect x="220" y="274" width="4" height="1" fill="#fff"/>
<rect x="230" y="267" width="1" height="3" fill="#ff3232"/>
<rect x="230" y="278" width="1" height="2" fill="#ff3232"/>
<path d="M228 270h5v8h-5zM229 271h3v6h-3z" fill="#ff3232" fill-rule="evenodd"/>
<rect x="238" y="266" width="1" height="15" fill="#fff"/>
<rect x="236" y="270" width="4" height="1" fill="#fff"/>
<rect x="246" y="253" width="1" height="13" fill="#ff3232"/>
<rect x="246" y="271" width="1" height="3" fill="#ff3232"/>
<path d="M244 266h5v5h-5zM245 267h3v3h-3z" fill="#ff3232" fill-rule="evenodd"/>
<rect x="253" y="266" width="1" height="33" fill="#54ffff"/>
<rect x="251" y="270" width="5" height="24" fill="#54ffff"/>
<rect x="261" y="288" width="1" height="15" fill="#54ffff"/>
<rect x="259" y="295" width="5" height="4" fill="#54ffff"/>
<rect x="269" y="292" width="1" height="11" fill="#fff"/>
<rect x="267" y="295" width="4" height="1" fill="#fff"/>
<rect x="277" y="290" width="1" height="13" fill="#fff"/>
<rect x="275" y="295" width="4" height="1" fill="#fff"/>
<rect x="285" y="253" width="1" height="17" fill="#ff3232"/>
<path d="M283 270h5v26h-5zM284 271h3v24h-3z" fill="#ff3232" fill-rule="evenodd"/>
<rect x="292" y="253" width="1" height="6" fill="#ff3232"/>
<rect x="292" y="266" width="1" height="8" fill="#ff3232"/>
<path d="M290 259h5v7h-5zM291 260h3v5h-3z" fill="#ff3232" fill-rule="evenodd"/>
<rect x="300" y="252" width="1" height="18" fill="#54ffff"/>
<rect x="298" y="259" width="5" height="4" fill="#54ffff"/>
<rect x="308" y="264" width="1" height="5" fill="#ff3232"/>
<path d="M306 256h5v8h-5zM307 257h3v6h-3z" fill="#ff3232" fill-rule="evenodd"/>
<rect x="316" y="252" width="1" height="22" fill="#54ffff"/>
<rect x="314" y="256" width="5" height="18" fill="#54ffff"/>
<rect x="324" y="270" width="1" height="18" fill="#54ffff"/>
<rect x="322" y="274" width="5" height="5" fill="#54ffff"/>
<rect x="331" y="278" width="1" height="14" fill="#fff"/>
<rect x="329" y="282" width="4" height="1" fill="#fff"/>
<rect x="339" y="275" width="1" height="2" fill="#ff3232"/>
<rect x="339" y="282" width="1" height="5" fill="#ff3232"/>
<path d="M337 277h5v5h-5zM338 278h3v3h-3z" fill="#ff3232" fill-rule="evenodd"/>
<rect x="347" y="277" width="1" height="29" fill="#54ffff"/>
<rect x="345" y="281" width="5" height="22" fill="#54ffff"/>
<rect x="355" y="295" width="1" height="15" fill="#54ffff"/>
<rect x="353" y="303" width="5" height="3" fill="#54ffff"/>
<rect x="363" y="311" width="1" height="6" fill="#ff3232"/>
<path d="M361 299h5v12h-5zM362 300h3v10h-3z" fill="#ff3232" fill-rule="evenodd"/>
<rect x="370" y="300" width="1" height="3" fill="#ff3232"/>
<path d="M368 292h5v8h-5zM369 293h3v6h-3z" fill="#ff3232" fill-rule="evenodd"/>
<rect x="378" y="296" width="1" height="2" fill="#ff3232"/>
<path d="M376 288h5v8h-5zM377 289h3v6h-3z" fill="#ff3232" fill-rule="evenodd"/>
<rect x="386" y="289" width="1" height="10" fill="#54ffff"/>
<rect x="384" y="292" width="5" height="3" fill="#54ffff"/>
<rect x="394" y="249" width="1" height="10" fill="#ff3232"/>
<rect x="394" y="296" width="1" height="7" fill="#ff3232"/>
<path d="M392 259h5v37h-5zM393 260h3v35h-3z" fill="#ff3232" fill-rule="evenodd"/>
<rect x="402" y="239" width="1" height="6" fill="#ff3232"/>
<path d="M400 245h5v15h-5zM401 246h3v13h-3z" fill="#ff3232" fill-rule="evenodd"/>
<rect x="409" y="241" width="1" height="22" fill="#54ffff"/>
<rect x="407" y="248" width="5" height="4" fill="#54ffff"/>
<rect x="417" y="241" width="1" height="18" fill="#fff"/>
<rect x="415" y="252" width="4" height="1" fill="#fff"/>
<rect x="425" y="248" width="1" height="26" fill="#54ffff"/>
<rect x="423" y="252" width="5" height="22" fill="#54ffff"/>
<rect x="433" y="267" width="1" height="4" fill="#ff3232"/>
<rect x="433" y="274" width="1" height="3" fill="#ff3232"/>
<path d="M431 271h5v3h-5zM432 272h3v1h-3z" fill="#ff3232" fill-rule="evenodd"/>
<rect x="441" y="253" width="1" height="11" fill="#ff3232"/>
<rect x="441" y="270" width="1" height="4" fill="#ff3232"/>
<path d="M439 264h5v6h-5zM440 265h3v4h-3z" fill="#ff3232" fill-rule="evenodd"/>
<path d="M446 256h5v8h-5zM447 257h3v6h-3z" fill="#ff3232" fill-rule="evenodd"/>
<rect x="456" y="239" width="1" height="6" fill="#ff3232"/>
<rect x="456" y="248" width="1" height="11" fill="#ff3232"/>
<path d="M454 245h5v3h-5zM455 246h3v1h-3z" fill="#ff3232" fill-rule="evenodd"/>
<rect x="464" y="148" width="1" height="72" fill="#ff3232"/>
<rect x="464" y="249" width="1" height="7" fill="#ff3232"/>
<path d="M462 220h5v29h-5zM463 221h3v27h-3z" fill="#ff3232" fill-rule="evenodd"/>
<rect x="472" y="221" width="1" height="6" fill="#ff3232"/>
<rect x="472" y="231" width="1" height="11" fill="#ff3232"/>
<path d="M470 227h5v4h-5zM471 228h3v2h-3z" fill="#ff3232" fill-rule="evenodd"/>
<rect x="480" y="212" width="1" height="22" fill="#fff"/>
<rect x="478" y="224" width="4" height="1" fill="#fff"/>
<rect x="487" y="223" width="1" height="15" fill="#54ffff"/>
<rect x="485" y="223" width="5" height="7" fill="#54ffff"/>
<rect x="495" y="230" width="1" height="36" fill="#54ffff"/>
<rect x="493" y="230" width="5" height="36" fill="#54ffff"/>
<rect x="503" y="256" width="1" height="36" fill="#54ffff"/>
<rect x="501" y="259" width="5" height="4" fill="#54ffff"/>
<rect x="511" y="256" width="1" height="21" fill="#54ffff"/>
<rect x="509" y="266" width="5" height="4" fill="#54ffff"/>
<rect x="519" y="258" width="1" height="5" fill="#ff3232"/>
<rect x="519" y="270" width="1" height="8" fill="#ff3232"/>
<path d="M517 263h5v7h-5zM518 264h3v5h-3z" fill="#ff3232" fill-rule="evenodd"/>
<rect x="526" y="252" width="1" height="25" fill="#54ffff"/>
<rect x="524" y="263" width="5" height="3" fill="#54ffff"/>
<rect x="534" y="263" width="1" height="36" fill="#54ffff"/>
<rect x="532" y="266" width="5" height="33" fill="#54ffff"/>
<rect x="542" y="290" width="1" height="5" fill="#ff3232"/>
<rect x="542" y="299" width="1" height="4" fill="#ff3232"/>
<path d="M540 295h5v4h-5zM541 296h3v2h-3z" fill="#ff3232" fill-rule="evenodd"/>
<rect x="550" y="295" width="1" height="11" fill="#ff3232"/>
<path d="M548 285h5v10h-5zM549 286h3v8h-3z" fill="#ff3232" fill-rule="evenodd"/>
<rect x="558" y="279" width="1" height="2" fill="#ff3232"/>
<rect x="558" y="286" width="1" height="2" fill="#ff3232"/>
<path d="M556 281h5v5h-5zM557 282h3v3h-3z" fill="#ff3232" fill-rule="evenodd"/>
<rect x="566" y="281" width="1" height="11" fill="#fff"/>
<rect x="564" y="286" width="4" height="1" fill="#fff"/>
<path d="M571 278h5v8h-5zM572 279h3v6h-3z" fill="#ff3232" fill-rule="evenodd"/>
<rect x="581" y="278" width="1" height="14" fill="#fff"/>
<rect x="579" y="280" width="4" height="1" fill="#fff"/>
<rect x="589" y="260" width="1" height="6" fill="#ff3232"/>
<rect x="589" y="278" width="1" height="3" fill="#ff3232"/>
<path d="M587 266h5v12h-5zM588 267h3v10h-3z" fill="#ff3232" fill-rule="evenodd"/>
<rect x="597" y="246" width="1" height="2" fill="#ff3232"/>
<rect x="597" y="260" width="1" height="2" fill="#ff3232"/>
<path d="M595 248h5v12h-5zM596 249h3v10h-3z" fill="#ff3232" fill-rule="evenodd"/>
<rect x="605" y="242" width="1" height="6" fill="#ff3232"/>
<path d="M603 220h5v22h-5zM604 221h3v20h-3z" fill="#ff3232" fill-rule="evenodd"/>
<rect x="612" y="212" width="1" height="22" fill="#54ffff"/>
<rect x="610" y="216" width="5" height="4" fill="#54ffff"/>
<rect x="620" y="212" width="1" height="36" fill="#54ffff"/>
<rect x="618" y="223" width="5" height="11" fill="#54ffff"/>
<rect x="628" y="234" width="1" height="29" fill="#54ffff"/>
<rect x="626" y="241" width="5" height="16" fill="#54ffff"/>
<rect x="636" y="257" width="1" height="20" fill="#54ffff"/>
<rect x="634" y="259" width="5" height="11" fill="#54ffff"/>
<rect x="644" y="271" width="1" height="32" fill="#54ffff"/>
<rect x="642" y="274" width="5" height="11" fill="#54ffff"/>
<rect x="651" y="271" width="1" height="3" fill="#ff3232"/>
<rect x="651" y="285" width="1" height="10" fill="#ff3232"/>
<path d="M649 274h5v11h-5zM650 275h3v9h-3z" fill="#ff3232" fill-rule="evenodd"/>
<rect x="659" y="270" width="1" height="18" fill="#54ffff"/>
<rect x="657" y="274" width="5" height="11" fill="#54ffff"/>
<rect x="667" y="210" width="1" height="46" fill="#ff3232"/>
<rect x="667" y="289" width="1" height="3" fill="#ff3232"/>
<path d="M665 256h5v33h-5zM666 257h3v31h-3z" fill="#ff3232" fill-rule="evenodd"/>
<rect x="675" y="252" width="1" height="25" fill="#54ffff"/>
<rect x="673" y="256" width="5" height="7" fill="#54ffff"/>
<rect x="683" y="263" width="1" height="14" fill="#54ffff"/>
<rect x="681" y="263" width="5" height="11" fill="#54ffff"/>
<rect x="690" y="269" width="1" height="1" fill="#ff3232"/>
<rect x="690" y="274" width="1" height="11" fill="#ff3232"/>
<path d="M688 270h5v4h-5zM689 271h3v2h-3z" fill="#ff3232" fill-rule="evenodd"/>
<rect x="698" y="270" width="1" height="7" fill="#ff3232"/>
<path d="M696 256h5v14h-5zM697 257h3v12h-3z" fill="#ff3232" fill-rule="evenodd"/>
<rect x="706" y="274" width="1" height="11" fill="#ff3232"/>
<path d="M704 256h5v18h-5zM705 257h3v16h-3z" fill="#ff3232" fill-rule="evenodd"/>
<rect x="714" y="248" width="1" height="18" fill="#54ffff"/>
<rect x="712" y="252" width="5" height="4" fill="#54ffff"/>
<rect x="722" y="253" width="1" height="3" fill="#ff3232"/>
<rect x="722" y="259" width="1" height="6" fill="#ff3232"/>
<path d="M720 256h5v3h-5zM721 257h3v1h-3z" fill="#ff3232" fill-rule="evenodd"/>
<rect x="729" y="248" width="1" height="22" fill="#54ffff"/>
<rect x="727" y="256" width="5" height="14" fill="#54ffff"/>
<rect x="737" y="263" width="1" height="29" fill="#54ffff"/>
<rect x="735" y="270" width="5" height="22" fill="#54ffff"/>
<rect x="745" y="277" width="1" height="15" fill="#54ffff"/>
<rect x="743" y="281" width="5" height="4" fill="#54ffff"/>
<rect x="753" y="256" width="1" height="4" fill="#ff3232"/>
<rect x="753" y="281" width="1" height="4" fill="#ff3232"/>
<path d="M751 260h5v21h-5zM752 261h3v19h-3z" fill="#ff3232" fill-rule="evenodd"/>
<rect x="761" y="242" width="1" height="6" fill="#ff3232"/>
<rect x="761" y="256" width="1" height="3" fill="#ff3232"/>
<path d="M759 248h5v8h-5zM760 249h3v6h-3z" fill="#ff3232" fill-rule="evenodd"/>
<rect x="768" y="245" width="1" height="21" fill="#fff"/>
<rect x="766" y="248" width="4" height="1" fill="#fff"/>
<rect x="776" y="216" width="1" height="44" fill="#54ffff"/>
<rect x="774" y="241" width="5" height="15" fill="#54ffff"/>
<rect x="784" y="249" width="1" height="3" fill="#ff3232"/>
<rect x="784" y="256" width="1" height="10" fill="#ff3232"/>
<path d="M782 252h5v4h-5zM783 253h3v2h-3z" fill="#ff3232" fill-rule="evenodd"/>
<rect x="792" y="252" width="1" height="14" fill="#54ffff"/>
<rect x="790" y="259" width="5" height="4" fill="#54ffff"/>
<rect x="800" y="263" width="1" height="14" fill="#54ffff"/>
<rect x="798" y="265" width="5" height="5" fill="#54ffff"/>
<rect x="807" y="256" width="1" height="18" fill="#fff"/>
<rect x="805" y="270" width="4" height="1" fill="#fff"/>
<rect x="815" y="257" width="1" height="8" fill="#ff3232"/>
<rect x="815" y="271" width="1" height="3" fill="#ff3232"/>
<path d="M813 265h5v6h-5zM814 266h3v4h-3z" fill="#ff3232" fill-rule="evenodd"/>
<rect x="823" y="249" width="1" height="3" fill="#ff3232"/>
<rect x="823" y="263" width="1" height="3" fill="#ff3232"/>
<path d="M821 252h5v11h-5zM822 253h3v9h-3z" fill="#ff3232" fill-rule="evenodd"/>
<rect x="831" y="246" width="1" height="2" fill="#ff3232"/>
<rect x="831" y="253" width="1" height="3" fill="#ff3232"/>
<path d="M829 248h5v5h-5zM830 249h3v3h-3z" fill="#ff3232" fill-rule="evenodd"/>
<rect x="839" y="231" width="1" height="3" fill="#ff3232"/>
<rect x="839" y="252" width="1" height="4" fill="#ff3232"/>
<path d="M837 234h5v18h-5zM838 235h3v16h-3z" fill="#ff3232" fill-rule="evenodd"/>
<rect x="846" y="230" width="1" height="15" fill="#54ffff"/>
<rect x="844" y="234" width="5" height="7" fill="#54ffff"/>
<rect x="854" y="231" width="1" height="3" fill="#ff3232"/>
<rect x="854" y="242" width="1" height="3" fill="#ff3232"/>
<path d="M852 234h5v8h-5zM853 235h3v6h-3z" fill="#ff3232" fill-rule="evenodd"/>
<rect x="862" y="213" width="1" height="7" fill="#ff3232"/>
<rect x="862" y="235" width="1" height="3" fill="#ff3232"/>
<path d="M860 220h5v15h-5zM861 221h3v13h-3z" fill="#ff3232" fill-rule="evenodd"/>
<rect x="870" y="210" width="1" height="6" fill="#ff3232"/>
<path d="M868 111h5v99h-5zM869 112h3v97h-3z" fill="#ff3232" fill-rule="evenodd"/>
<rect x="878" y="23" width="1" height="103" fill="#54ffff"/>
<rect x="876" y="90" width="5" height="21" fill="#54ffff"/>
<rect x="886" y="76" width="1" height="21" fill="#ff3232"/>
<rect x="886" y="104" width="1" height="33" fill="#ff3232"/>
<path d="M884 97h5v7h-5zM885 98h3v5h-3z" fill="#ff3232" fill-rule="evenodd"/>
<rect x="893" y="80" width="1" height="17" fill="#ff3232"/>
<rect x="893" y="108" width="1" height="7" fill="#ff3232"/>
<path d="M891 97h5v11h-5zM892 98h3v9h-3z" fill="#ff3232" fill-rule="evenodd"/>
<rect x="901" y="58" width="1" height="22" fill="#ff3232"/>
<rect x="901" y="108" width="1" height="7" fill="#ff3232"/>
<path d="M899 80h5v28h-5zM900 81h3v26h-3z" fill="#ff3232" fill-rule="evenodd"/>
<rect x="909" y="82" width="1" height="44" fill="#54ffff"/>
<rect x="907" y="82" width="5" height="33" fill="#54ffff"/>
<rect x="917" y="108" width="1" height="61" fill="#54ffff"/>
<rect x="915" y="118" width="5" height="40" fill="#54ffff"/>
<rect x="925" y="151" width="1" height="29" fill="#54ffff"/>
<rect x="923" y="155" width="5" height="14" fill="#54ffff"/>
<rect x="932" y="165" width="1" height="51" fill="#54ffff"/>
<rect x="930" y="183" width="5" height="29" fill="#54ffff"/>
<rect x="940" y="181" width="1" height="6" fill="#ff3232"/>
<rect x="940" y="205" width="1" height="22" fill="#ff3232"/>
<path d="M938 187h5v18h-5zM939 188h3v16h-3z" fill="#ff3232" fill-rule="evenodd"/>
<rect x="948" y="174" width="1" height="6" fill="#ff3232"/>
<rect x="948" y="192" width="1" height="9" fill="#ff3232"/>
<path d="M946 180h5v12h-5zM947 181h3v10h-3z" fill="#ff3232" fill-rule="evenodd"/>
<rect x="956" y="169" width="1" height="29" fill="#54ffff"/>
<rect x="954" y="183" width="5" height="11" fill="#54ffff"/>
<rect x="964" y="191" width="1" height="17" fill="#54ffff"/>
<rect x="962" y="198" width="5" height="3" fill="#54ffff"/>
<rect x="971" y="170" width="1" height="3" fill="#ff3232"/>
<rect x="971" y="195" width="1" height="6" fill="#ff3232"/>
<path d="M969 173h5v22h-5zM970 174h3v20h-3z" fill="#ff3232" fill-rule="evenodd"/>
<rect x="979" y="165" width="1" height="21" fill="#54ffff"/>
<rect x="977" y="169" width="5" height="14" fill="#54ffff"/>
<rect x="987" y="174" width="1" height="2" fill="#ff3232"/>
<rect x="987" y="186" width="1" height="15" fill="#ff3232"/>
<path d="M985 176h5v10h-5zM986 177h3v8h-3z" fill="#ff3232" fill-rule="evenodd"/>
<rect x="995" y="173" width="1" height="32" fill="#54ffff"/>
<rect x="993" y="173" width="5" height="28" fill="#54ffff"/>
<rect x="1003" y="198" width="1" height="25" fill="#54ffff"/>
<rect x="1001" y="201" width="5" height="19" fill="#54ffff"/>
<rect x="1010" y="199" width="1" height="2" fill="#ff3232"/>
<rect x="1010" y="217" width="1" height="10" fill="#ff3232"/>
<path d="M1008 201h5v16h-5zM1009 202h3v14h-3z" fill="#ff3232" fill-rule="evenodd"/>
<rect x="1018" y="191" width="1" height="17" fill="#54ffff"/>
<rect x="1016" y="198" width="5" height="3" fill="#54ffff"/>
<path d="M497 333h7v1h-7zM588 319h6v1h-6zM429 344h4v1h-4zM671 305h5v1h-5zM537 327h6v1h-6zM695 301h8v1h-8zM947 275h14v1h-14zM484 335h7v1h-7zM738 296h10v1h-10zM784 291h10v1h-10zM804 289h9v1h-9zM933 276h14v1h-14zM575 321h6v1h-6zM897 279h11v1h-11zM433 343h6v1h-6zM961 274h12v1h-12zM682 303h6v1h-6zM794 290h10v1h-10zM766 293h9v1h-9zM908 278h12v1h-12zM850 284h9v1h-9zM594 318h7v1h-7zM543 326h6v1h-6zM633 312h6v1h-6zM491 334h6v1h-6zM748 295h10v1h-10zM868 282h10v1h-10zM719 298h9v1h-9zM841 285h9v1h-9zM981 272h8v1h-8zM581 320h7v1h-7zM813 288h9v1h-9zM667 306h4v1h-4zM530 328h7v1h-7zM688 302h7v1h-7zM459 339h6v1h-6zM703 300h8v1h-8zM822 287h10v1h-10zM478 336h6v1h-6zM920 277h13v1h-13zM887 280h10v1h-10zM517 330h7v1h-7zM452 340h7v1h-7zM465 338h6v1h-6zM652 309h6v1h-6zM758 294h8v1h-8zM728 297h10v1h-10zM989 271h9v1h-9zM1006 269h8v1h-8zM510 331h7v1h-7zM601 317h6v1h-6zM626 313h7v1h-7zM711 299h8v1h-8zM832 286h9v1h-9zM973 273h8v1h-8zM998 270h8v1h-8zM663 307h4v1h-4zM524 329h6v1h-6zM504 332h6v1h-6zM613 315h7v1h-7zM471 337h7v1h-7zM639 311h6v1h-6zM562 323h7v1h-7zM1014 268h5v1h-5zM645 310h7v1h-7zM859 283h9v1h-9zM620 314h6v1h-6zM676 304h6v1h-6zM569 322h6v1h-6zM658 308h5v1h-5zM607 316h6v1h-6zM775 292h9v1h-9zM439 342h7v1h-7zM878 281h9v1h-9zM549 325h7v1h-7zM556 324h6v1h-6zM446 341h6v1h-6z" fill="#0000ff"/>
<path d="M773 277h15v1h-15zM927 261h7v1h-7zM13 280h20v1h-20zM657 280h36v1h-36zM733 280h24v1h-24zM42 283h5v1h-5zM631 283h10v1h-10zM60 289h3v1h-3zM545 289h43v1h-43zM82 293h7v1h-7zM333 293h73v1h-73zM122 299h27v1h-27zM276 299h15v1h-15zM1000 254h12v1h-12zM861 272h10v1h-10zM63 290h10v1h-10zM491 290h54v1h-54zM11 281h2v1h-2zM649 281h8v1h-8zM693 281h40v1h-40zM152 301h5v1h-5zM241 301h15v1h-15zM77 292h5v1h-5zM406 292h65v1h-65zM804 275h15v1h-15zM34 282h8v1h-8zM641 282h8v1h-8zM73 291h4v1h-4zM471 291h20v1h-20zM766 278h7v1h-7zM166 303h7v1h-7zM216 303h15v1h-15zM905 265h6v1h-6zM1012 253h7v1h-7zM114 298h8v1h-8zM291 298h10v1h-10zM841 273h20v1h-20zM871 271h8v1h-8zM942 259h10v1h-10zM975 256h12v1h-12zM47 284h3v1h-3zM622 284h9v1h-9zM819 274h22v1h-22zM55 287h2v1h-2zM597 287h8v1h-8zM157 302h9v1h-9zM231 302h10v1h-10zM181 305h15v1h-15zM952 258h11v1h-11zM879 270h5v1h-5zM987 255h13v1h-13zM104 296h4v1h-4zM311 296h9v1h-9zM53 286h2v1h-2zM605 286h9v1h-9zM788 276h16v1h-16zM173 304h8v1h-8zM196 304h20v1h-20zM963 257h12v1h-12zM934 260h8v1h-8zM57 288h3v1h-3zM588 288h9v1h-9zM50 285h3v1h-3zM614 285h8v1h-8zM921 262h6v1h-6zM149 300h3v1h-3zM256 300h20v1h-20zM757 279h9v1h-9zM97 295h7v1h-7zM320 295h6v1h-6zM108 297h6v1h-6zM301 297h10v1h-10zM894 267h5v1h-5zM916 263h5v1h-5zM889 268h5v1h-5zM89 294h8v1h-8zM326 294h7v1h-7zM884 269h5v1h-5zM899 266h6v1h-6zM911 264h5v1h-5zM33 281h1v1h-1z" fill="#c0c0c0"/>
<path d="M666 268h44v1h-44zM561 278h15v1h-15zM710 267h13v1h-13zM40 299h62v1h-62zM137 299h8v1h-8zM484 280h19v1h-19zM831 261h10v1h-10zM908 243h4v1h-4zM161 296h6v1h-6zM503 279h58v1h-58zM1012 228h4v1h-4zM928 240h10v1h-10zM11 300h29v1h-29zM102 300h16v1h-16zM125 300h12v1h-12zM989 233h6v1h-6zM186 292h17v1h-17zM213 292h7v1h-7zM287 292h6v1h-6zM576 277h10v1h-10zM841 260h14v1h-14zM334 286h30v1h-30zM423 286h15v1h-15zM174 293h12v1h-12zM220 293h10v1h-10zM278 293h9v1h-9zM329 287h5v1h-5zM364 287h17v1h-17zM404 287h19v1h-19zM450 284h8v1h-8zM466 282h10v1h-10zM311 289h10v1h-10zM623 270h29v1h-29zM438 285h12v1h-12zM892 249h3v1h-3zM613 271h10v1h-10zM321 288h8v1h-8zM381 288h23v1h-23zM977 235h6v1h-6zM458 283h8v1h-8zM1000 231h4v1h-4zM723 266h50v1h-50zM171 294h3v1h-3zM230 294h48v1h-48zM591 275h5v1h-5zM773 265h39v1h-39zM865 258h3v1h-3zM938 239h12v1h-12zM1004 230h4v1h-4zM652 269h14v1h-14zM153 297h8v1h-8zM855 259h10v1h-10zM476 281h8v1h-8zM983 234h6v1h-6zM203 291h10v1h-10zM293 291h8v1h-8zM882 252h3v1h-3zM596 274h5v1h-5zM812 264h7v1h-7zM950 238h12v1h-12zM971 236h6v1h-6zM995 232h5v1h-5zM586 276h5v1h-5zM962 237h9v1h-9zM607 272h6v1h-6zM819 263h5v1h-5zM145 298h8v1h-8zM118 301h7v1h-7zM877 254h3v1h-3zM824 262h7v1h-7zM900 246h2v1h-2zM872 256h3v1h-3zM918 241h10v1h-10zM905 244h3v1h-3zM888 250h4v1h-4zM895 248h2v1h-2zM301 290h10v1h-10zM167 295h4v1h-4zM1008 229h4v1h-4zM601 273h6v1h-6zM868 257h4v1h-4zM912 242h6v1h-6zM1016 227h3v1h-3zM902 245h3v1h-3zM880 253h2v1h-2zM875 255h2v1h-2zM885 251h3v1h-3zM897 247h3v1h-3z" fill="#00ff00"/>
<path d="M474 268h2v1h-2zM655 268h8v1h-8zM119 294h37v1h-37zM240 294h4v1h-4zM482 265h2v1h-2zM640 265h3v1h-3zM692 265h4v1h-4zM772 265h24v1h-24zM476 267h3v1h-3zM648 267h7v1h-7zM663 267h24v1h-24zM47 279h5v1h-5zM328 279h7v1h-7zM351 279h8v1h-8zM408 279h3v1h-3zM920 199h2v1h-2zM431 274h21v1h-21zM195 298h29v1h-29zM101 289h6v1h-6zM279 289h4v1h-4zM458 272h4v1h-4zM15 285h6v1h-6zM70 285h8v1h-8zM294 285h4v1h-4zM509 259h4v1h-4zM552 259h4v1h-4zM609 259h7v1h-7zM726 259h7v1h-7zM841 259h4v1h-4zM427 275h4v1h-4zM1014 163h5v1h-5zM31 282h6v1h-6zM57 282h3v1h-3zM306 282h6v1h-6zM380 282h4v1h-4zM390 282h8v1h-8zM505 260h4v1h-4zM556 260h6v1h-6zM603 260h6v1h-6zM616 260h8v1h-8zM718 260h8v1h-8zM733 260h8v1h-8zM837 260h4v1h-4zM25 283h6v1h-6zM60 283h4v1h-4zM302 283h4v1h-4zM384 283h6v1h-6zM11 286h4v1h-4zM78 286h8v1h-8zM291 286h3v1h-3zM486 263h11v1h-11zM572 263h21v1h-21zM634 263h4v1h-4zM702 263h6v1h-6zM757 263h8v1h-8zM811 263h16v1h-16zM41 280h6v1h-6zM52 280h2v1h-2zM320 280h8v1h-8zM359 280h8v1h-8zM404 280h4v1h-4zM497 262h4v1h-4zM568 262h4v1h-4zM593 262h6v1h-6zM630 262h4v1h-4zM708 262h4v1h-4zM749 262h8v1h-8zM827 262h6v1h-6zM1001 165h6v1h-6zM37 281h4v1h-4zM54 281h3v1h-3zM312 281h8v1h-8zM367 281h13v1h-13zM398 281h6v1h-6zM978 172h2v1h-2zM335 278h16v1h-16zM411 278h4v1h-4zM115 293h4v1h-4zM244 293h21v1h-21zM21 284h4v1h-4zM64 284h6v1h-6zM298 284h4v1h-4zM86 287h7v1h-7zM287 287h4v1h-4zM466 270h4v1h-4zM501 261h4v1h-4zM562 261h6v1h-6zM599 261h4v1h-4zM624 261h6v1h-6zM712 261h6v1h-6zM741 261h8v1h-8zM833 261h4v1h-4zM517 257h6v1h-6zM530 257h16v1h-16zM850 257h8v1h-8zM874 244h2v1h-2zM171 296h16v1h-16zM228 296h6v1h-6zM93 288h8v1h-8zM283 288h4v1h-4zM484 264h2v1h-2zM638 264h2v1h-2zM696 264h6v1h-6zM765 264h7v1h-7zM796 264h15v1h-15zM941 190h2v1h-2zM479 266h3v1h-3zM643 266h5v1h-5zM687 266h5v1h-5zM156 295h15v1h-15zM234 295h6v1h-6zM986 168h5v1h-5zM421 276h6v1h-6zM1007 164h7v1h-7zM523 256h7v1h-7zM858 256h5v1h-5zM916 201h2v1h-2zM960 181h3v1h-3zM107 290h2v1h-2zM275 290h4v1h-4zM997 166h4v1h-4zM513 258h4v1h-4zM546 258h6v1h-6zM845 258h5v1h-5zM931 194h3v1h-3zM936 192h3v1h-3zM927 196h2v1h-2zM951 185h2v1h-2zM415 277h6v1h-6zM947 187h2v1h-2zM912 203h2v1h-2zM905 208h2v1h-2zM452 273h6v1h-6zM187 297h8v1h-8zM224 297h4v1h-4zM109 291h3v1h-3zM271 291h4v1h-4zM462 271h4v1h-4zM943 189h2v1h-2zM918 200h2v1h-2zM958 182h2v1h-2zM112 292h3v1h-3zM265 292h6v1h-6zM991 167h6v1h-6zM953 184h2v1h-2zM975 173h3v1h-3zM929 195h2v1h-2zM939 191h2v1h-2zM934 193h2v1h-2zM914 202h2v1h-2zM910 204h2v1h-2zM949 186h2v1h-2zM924 197h3v1h-3zM973 174h2v1h-2zM470 269h4v1h-4zM945 188h2v1h-2zM955 183h3v1h-3zM965 179h2v1h-2zM969 176h2v1h-2zM984 169h2v1h-2zM922 198h2v1h-2zM971 175h2v1h-2zM963 180h2v1h-2zM982 170h2v1h-2zM980 171h2v1h-2zM898 216h1v1h-1zM886 232h1v1h-1zM878 241h1v1h-1zM881 238h1v1h-1zM894 221h1v2h-1zM897 217h1v2h-1zM889 228h1v1h-1zM909 205h1v1h-1zM900 213h1v2h-1zM967 178h1v1h-1zM876 243h1v1h-1zM869 249h1v1h-1zM888 229h1v2h-1zM864 254h1v1h-1zM880 239h1v1h-1zM883 235h1v1h-1zM896 219h1v1h-1zM899 215h1v1h-1zM871 247h1v1h-1zM891 225h1v2h-1zM868 250h1v1h-1zM866 252h1v1h-1zM902 211h1v1h-1zM887 231h1v1h-1zM882 236h1v2h-1zM863 255h1v1h-1zM890 227h1v1h-1zM885 233h1v1h-1zM873 245h1v1h-1zM893 223h1v1h-1zM870 248h1v1h-1zM904 209h1v1h-1zM877 242h1v1h-1zM908 206h1v1h-1zM901 212h1v1h-1zM865 253h1v1h-1zM892 224h1v1h-1zM884 234h1v1h-1zM879 240h1v1h-1zM872 246h1v1h-1zM895 220h1v1h-1zM903 210h1v1h-1zM907 207h1v1h-1zM968 177h1v1h-1zM867 251h1v1h-1z" fill="#ff00ff"/>
<path d="M634 255h21v1h-21zM663 255h8v1h-8zM837 255h11v1h-11zM626 257h4v1h-4zM676 257h2v1h-2zM827 257h6v1h-6zM281 280h8v1h-8zM364 280h2v1h-2zM411 280h4v1h-4zM579 280h12v1h-12zM622 258h4v1h-4zM822 258h5v1h-5zM64 283h12v1h-12zM242 283h3v1h-3zM370 283h2v1h-2zM404 283h2v1h-2zM306 276h6v1h-6zM333 276h4v1h-4zM349 276h4v1h-4zM424 276h2v1h-2zM564 276h2v1h-2zM245 282h5v1h-5zM368 282h2v1h-2zM406 282h2v1h-2zM451 263h2v1h-2zM763 263h4v1h-4zM788 263h8v1h-8zM809 263h2v1h-2zM140 305h24v1h-24zM169 305h4v1h-4zM179 305h6v1h-6zM449 264h2v1h-2zM721 264h12v1h-12zM760 264h3v1h-3zM796 264h13v1h-13zM630 256h4v1h-4zM655 256h8v1h-8zM671 256h5v1h-5zM833 256h4v1h-4zM128 301h2v1h-2zM193 301h2v1h-2zM60 284h4v1h-4zM76 284h2v1h-2zM240 284h2v1h-2zM372 284h4v1h-4zM401 284h3v1h-3zM50 286h4v1h-4zM81 286h5v1h-5zM93 286h8v1h-8zM234 286h3v1h-3zM379 286h2v1h-2zM397 286h2v1h-2zM173 306h6v1h-6zM482 247h4v1h-4zM491 247h8v1h-8zM523 247h4v1h-4zM1001 191h2v1h-2zM1007 191h7v1h-7zM453 262h2v1h-2zM544 262h2v1h-2zM616 262h2v1h-2zM684 262h2v1h-2zM767 262h21v1h-21zM811 262h3v1h-3zM548 265h2v1h-2zM688 265h2v1h-2zM718 265h3v1h-3zM733 265h6v1h-6zM757 265h3v1h-3zM444 267h2v1h-2zM551 267h2v1h-2zM692 267h2v1h-2zM712 267h4v1h-4zM743 267h12v1h-12zM132 303h3v1h-3zM187 303h3v1h-3zM11 287h2v1h-2zM48 287h2v1h-2zM86 287h7v1h-7zM101 287h5v1h-5zM232 287h2v1h-2zM381 287h2v1h-2zM395 287h2v1h-2zM25 291h14v1h-14zM111 291h2v1h-2zM216 291h4v1h-4zM337 275h12v1h-12zM426 275h2v1h-2zM601 275h2v1h-2zM250 281h31v1h-31zM366 281h2v1h-2zM408 281h3v1h-3zM296 278h6v1h-6zM320 278h8v1h-8zM357 278h4v1h-4zM419 278h2v1h-2zM570 278h5v1h-5zM595 278h3v1h-3zM468 251h3v1h-3zM532 251h2v1h-2zM857 251h2v1h-2zM17 289h4v1h-4zM44 289h2v1h-2zM224 289h4v1h-4zM385 289h5v1h-5zM289 279h7v1h-7zM361 279h3v1h-3zM415 279h4v1h-4zM575 279h4v1h-4zM591 279h4v1h-4zM455 261h2v1h-2zM814 261h3v1h-3zM471 250h3v1h-3zM530 250h2v1h-2zM859 250h2v1h-2zM464 253h2v1h-2zM852 253h3v1h-3zM486 246h5v1h-5zM499 246h24v1h-24zM446 266h2v1h-2zM690 266h2v1h-2zM716 266h2v1h-2zM739 266h4v1h-4zM755 266h2v1h-2zM302 277h4v1h-4zM312 277h8v1h-8zM328 277h5v1h-5zM353 277h4v1h-4zM421 277h3v1h-3zM566 277h4v1h-4zM598 277h2v1h-2zM13 288h4v1h-4zM46 288h2v1h-2zM106 288h2v1h-2zM228 288h4v1h-4zM383 288h2v1h-2zM390 288h5v1h-5zM681 260h2v1h-2zM817 260h2v1h-2zM931 136h3v1h-3zM620 259h2v1h-2zM679 259h2v1h-2zM819 259h3v1h-3zM432 272h3v1h-3zM478 248h4v1h-4zM527 248h2v1h-2zM213 292h3v1h-3zM430 273h2v1h-2zM560 273h2v1h-2zM929 137h2v1h-2zM944 137h2v1h-2zM428 274h2v1h-2zM603 274h2v1h-2zM437 270h3v1h-3zM556 270h2v1h-2zM927 138h2v1h-2zM936 134h3v1h-3zM135 304h5v1h-5zM164 304h5v1h-5zM185 304h2v1h-2zM442 268h2v1h-2zM694 268h3v1h-3zM708 268h4v1h-4zM126 300h2v1h-2zM195 300h3v1h-3zM21 290h4v1h-4zM39 290h5v1h-5zM109 290h2v1h-2zM220 290h4v1h-4zM440 269h2v1h-2zM554 269h2v1h-2zM697 269h11v1h-11zM466 252h2v1h-2zM855 252h2v1h-2zM119 296h2v1h-2zM204 296h2v1h-2zM1003 192h4v1h-4zM1014 192h5v1h-5zM996 188h2v1h-2zM130 302h2v1h-2zM190 302h3v1h-3zM122 298h2v1h-2zM200 298h2v1h-2zM54 285h6v1h-6zM78 285h3v1h-3zM237 285h3v1h-3zM376 285h3v1h-3zM399 285h2v1h-2zM988 184h2v1h-2zM848 254h4v1h-4zM124 299h2v1h-2zM198 299h2v1h-2zM992 186h2v1h-2zM985 182h2v1h-2zM435 271h2v1h-2zM117 295h2v1h-2zM206 295h3v1h-3zM114 293h2v1h-2zM211 293h2v1h-2zM474 249h4v1h-4zM861 249h2v1h-2zM921 142h2v1h-2zM939 133h2v1h-2zM981 179h2v1h-2zM202 297h2v1h-2zM925 139h2v1h-2zM999 190h2v1h-2zM990 185h2v1h-2zM209 294h2v1h-2zM934 135h2v1h-2zM994 187h2v1h-2zM462 255h1v1h-1zM537 255h1v1h-1zM460 257h1v1h-1zM539 257h1v1h-1zM459 258h1v1h-1zM540 258h1v1h-1zM678 258h1v1h-1zM878 217h1v3h-1zM600 276h1v1h-1zM546 263h1v1h-1zM615 263h1v1h-1zM686 263h1v1h-1zM547 264h1v1h-1zM614 264h1v1h-1zM687 264h1v1h-1zM461 256h1v1h-1zM538 256h1v1h-1zM863 247h1v2h-1zM883 207h1v2h-1zM908 155h1v2h-1zM961 155h1v1h-1zM890 191h1v2h-1zM448 265h1v1h-1zM613 265h1v1h-1zM611 267h1v1h-1zM874 226h1v2h-1zM563 275h1v1h-1zM108 289h1v1h-1zM543 261h1v1h-1zM618 261h1v1h-1zM683 261h1v1h-1zM535 253h1v1h-1zM879 215h1v2h-1zM891 188h1v3h-1zM998 189h1v1h-1zM903 163h1v2h-1zM968 163h1v1h-1zM864 245h1v2h-1zM897 175h1v2h-1zM978 175h1v2h-1zM919 144h1v1h-1zM952 144h1v1h-1zM550 266h1v1h-1zM612 266h1v1h-1zM909 154h1v1h-1zM960 153h1v2h-1zM457 260h1v1h-1zM542 260h1v1h-1zM619 260h1v1h-1zM943 136h1v1h-1zM458 259h1v1h-1zM541 259h1v1h-1zM559 272h1v1h-1zM606 272h1v1h-1zM113 292h1v1h-1zM605 273h1v1h-1zM562 274h1v1h-1zM608 270h1v1h-1zM946 138h1v1h-1zM941 134h1v1h-1zM553 268h1v1h-1zM610 268h1v1h-1zM898 173h1v2h-1zM977 174h1v1h-1zM609 269h1v1h-1zM534 252h1v1h-1zM918 145h1v1h-1zM953 145h1v1h-1zM873 228h1v2h-1zM893 183h1v3h-1zM911 152h1v1h-1zM959 152h1v1h-1zM894 181h1v2h-1zM984 181h1v1h-1zM463 254h1v1h-1zM536 254h1v1h-1zM910 153h1v1h-1zM907 157h1v2h-1zM963 157h1v2h-1zM902 165h1v2h-1zM971 166h1v1h-1zM892 186h1v2h-1zM869 235h1v2h-1zM914 149h1v1h-1zM957 149h1v2h-1zM906 159h1v1h-1zM964 159h1v1h-1zM558 271h1v1h-1zM607 271h1v1h-1zM882 209h1v2h-1zM976 173h1v1h-1zM865 243h1v2h-1zM529 249h1v1h-1zM950 142h1v1h-1zM970 165h1v1h-1zM877 220h1v2h-1zM987 183h1v1h-1zM896 177h1v2h-1zM980 178h1v1h-1zM895 179h1v2h-1zM962 156h1v1h-1zM121 297h1v1h-1zM905 160h1v2h-1zM966 161h1v1h-1zM969 164h1v1h-1zM947 139h1v1h-1zM872 230h1v2h-1zM889 193h1v2h-1zM901 167h1v2h-1zM972 167h1v2h-1zM868 237h1v2h-1zM916 147h1v1h-1zM955 147h1v1h-1zM876 222h1v2h-1zM888 195h1v3h-1zM965 160h1v1h-1zM923 141h1v1h-1zM949 141h1v1h-1zM900 169h1v2h-1zM973 169h1v1h-1zM917 146h1v1h-1zM954 146h1v1h-1zM913 150h1v1h-1zM871 232h1v2h-1zM974 170h1v1h-1zM867 239h1v2h-1zM116 294h1v1h-1zM942 135h1v1h-1zM979 177h1v1h-1zM920 143h1v1h-1zM951 143h1v1h-1zM983 180h1v1h-1zM875 224h1v2h-1zM899 171h1v2h-1zM975 171h1v2h-1zM887 198h1v2h-1zM886 200h1v3h-1zM866 241h1v2h-1zM915 148h1v1h-1zM956 148h1v1h-1zM870 234h1v1h-1zM881 211h1v2h-1zM924 140h1v1h-1zM948 140h1v1h-1zM904 162h1v1h-1zM967 162h1v1h-1zM885 203h1v2h-1zM880 213h1v2h-1zM912 151h1v1h-1zM958 151h1v1h-1zM884 205h1v2h-1z" fill="#ffff00"/>
<path d="M62 278h6v1h-6zM258 278h2v1h-2zM542 278h2v1h-2zM588 278h2v1h-2zM420 258h2v1h-2zM431 258h3v1h-3zM726 258h4v1h-4zM801 258h2v1h-2zM15 290h6v1h-6zM281 290h5v1h-5zM356 290h2v1h-2zM45 284h2v1h-2zM220 284h2v1h-2zM555 284h2v1h-2zM575 284h2v1h-2zM313 265h2v1h-2zM318 265h4v1h-4zM622 236h4v1h-4zM629 236h2v1h-2zM29 287h4v1h-4zM215 287h2v1h-2zM273 287h2v1h-2zM561 287h2v1h-2zM569 287h2v1h-2zM123 308h2v1h-2zM150 308h2v1h-2zM784 252h4v1h-4zM840 252h2v1h-2zM418 259h2v1h-2zM434 259h2v1h-2zM721 259h5v1h-5zM952 185h2v1h-2zM983 185h8v1h-8zM1014 198h3v1h-3zM311 266h2v1h-2zM322 266h3v1h-3zM104 297h2v1h-2zM171 297h8v1h-8zM187 297h13v1h-13zM376 297h6v1h-6zM438 261h2v1h-2zM454 261h3v1h-3zM716 261h2v1h-2zM805 261h2v1h-2zM829 261h3v1h-3zM21 289h4v1h-4zM85 289h2v1h-2zM212 289h2v1h-2zM277 289h4v1h-4zM565 289h2v1h-2zM901 99h9v1h-9zM102 296h2v1h-2zM200 296h2v1h-2zM372 296h4v1h-4zM382 296h5v1h-5zM1017 199h2v1h-2zM413 263h2v1h-2zM445 263h5v1h-5zM698 263h12v1h-12zM809 263h4v1h-4zM819 263h6v1h-6zM39 285h6v1h-6zM80 285h2v1h-2zM218 285h2v1h-2zM270 285h2v1h-2zM557 285h2v1h-2zM573 285h2v1h-2zM240 272h4v1h-4zM247 272h2v1h-2zM335 272h3v1h-3zM673 272h4v1h-4zM749 272h6v1h-6zM135 314h3v1h-3zM167 298h4v1h-4zM179 298h8v1h-8zM844 249h2v1h-2zM127 310h2v1h-2zM440 262h5v1h-5zM450 262h4v1h-4zM710 262h6v1h-6zM772 262h2v1h-2zM807 262h2v1h-2zM825 262h4v1h-4zM244 271h3v1h-3zM333 271h2v1h-2zM677 271h4v1h-4zM745 271h4v1h-4zM755 271h4v1h-4zM52 281h2v1h-2zM549 281h2v1h-2zM582 281h2v1h-2zM309 267h2v1h-2zM325 267h2v1h-2zM692 267h2v1h-2zM738 267h2v1h-2zM766 267h2v1h-2zM315 264h3v1h-3zM696 264h2v1h-2zM813 264h6v1h-6zM33 286h6v1h-6zM351 286h2v1h-2zM559 286h2v1h-2zM571 286h2v1h-2zM89 292h4v1h-4zM208 292h2v1h-2zM360 292h2v1h-2zM120 307h3v1h-3zM234 275h2v1h-2zM54 280h3v1h-3zM72 280h3v1h-3zM226 280h2v1h-2zM262 280h2v1h-2zM546 280h3v1h-3zM584 280h2v1h-2zM238 273h2v1h-2zM249 273h2v1h-2zM338 273h2v1h-2zM669 273h4v1h-4zM254 276h2v1h-2zM848 246h2v1h-2zM131 312h2v1h-2zM142 312h3v1h-3zM329 269h2v1h-2zM530 269h2v1h-2zM687 269h4v1h-4zM741 269h2v1h-2zM762 269h2v1h-2zM481 233h2v1h-2zM494 233h2v1h-2zM57 279h5v1h-5zM68 279h4v1h-4zM228 279h2v1h-2zM260 279h2v1h-2zM296 279h2v1h-2zM544 279h2v1h-2zM586 279h2v1h-2zM115 305h2v1h-2zM485 230h2v1h-2zM488 230h2v1h-2zM958 190h2v1h-2zM1002 190h2v1h-2zM436 260h2v1h-2zM718 260h3v1h-3zM490 231h2v1h-2zM133 313h2v1h-2zM138 313h4v1h-4zM236 274h2v1h-2zM251 274h2v1h-2zM536 274h2v1h-2zM593 274h2v1h-2zM659 274h10v1h-10zM971 187h4v1h-4zM996 187h2v1h-2zM158 303h2v1h-2zM422 257h2v1h-2zM427 257h4v1h-4zM799 257h2v1h-2zM93 293h5v1h-5zM206 293h2v1h-2zM362 293h3v1h-3zM47 283h2v1h-2zM267 283h2v1h-2zM553 283h2v1h-2zM577 283h3v1h-3zM852 243h2v1h-2zM975 186h8v1h-8zM991 186h5v1h-5zM327 268h2v1h-2zM764 268h2v1h-2zM49 282h3v1h-3zM76 282h2v1h-2zM223 282h2v1h-2zM265 282h2v1h-2zM551 282h2v1h-2zM580 282h2v1h-2zM100 295h2v1h-2zM202 295h2v1h-2zM369 295h3v1h-3zM231 277h2v1h-2zM256 277h2v1h-2zM540 277h2v1h-2zM626 235h3v1h-3zM793 254h2v1h-2zM25 288h4v1h-4zM275 288h2v1h-2zM563 288h2v1h-2zM567 288h2v1h-2zM492 232h2v1h-2zM11 291h4v1h-4zM358 291h2v1h-2zM331 270h2v1h-2zM681 270h6v1h-6zM743 270h2v1h-2zM759 270h3v1h-3zM788 253h5v1h-5zM634 239h2v1h-2zM163 300h2v1h-2zM1000 189h2v1h-2zM165 299h2v1h-2zM1012 197h2v1h-2zM98 294h2v1h-2zM204 294h2v1h-2zM365 294h4v1h-4zM998 188h2v1h-2zM962 193h2v1h-2zM1006 193h2v1h-2zM780 255h2v1h-2zM795 255h2v1h-2zM424 256h3v1h-3zM797 256h2v1h-2zM113 304h2v1h-2zM156 304h2v1h-2zM125 309h2v1h-2zM148 309h2v1h-2zM109 301h2v1h-2zM161 301h2v1h-2zM117 306h3v1h-3zM153 306h2v1h-2zM1010 196h2v1h-2zM632 238h2v1h-2zM858 238h2v1h-2zM129 311h2v1h-2zM145 311h2v1h-2zM620 237h2v1h-2zM230 278h1v1h-1zM298 278h1v1h-1zM343 277h1v2h-1zM400 278h1v1h-1zM458 258h1v2h-1zM519 258h1v1h-1zM605 258h1v1h-1zM647 257h1v2h-1zM777 258h1v1h-1zM834 258h1v1h-1zM87 290h1v1h-1zM211 290h1v1h-1zM391 290h1v1h-1zM79 284h1v1h-1zM269 284h1v1h-1zM291 284h1v1h-1zM349 284h1v1h-1zM395 284h1v2h-1zM411 265h1v1h-1zM526 265h1v1h-1zM601 264h1v2h-1zM652 265h1v1h-1zM695 265h1v1h-1zM736 265h1v1h-1zM769 265h1v1h-1zM478 236h1v1h-1zM498 236h1v1h-1zM861 236h1v1h-1zM867 217h1v3h-1zM83 287h1v1h-1zM288 287h1v1h-1zM353 287h1v1h-1zM393 287h1v1h-1zM893 126h1v3h-1zM927 128h1v4h-1zM881 171h1v3h-1zM942 171h1v2h-1zM463 252h1v1h-1zM513 252h1v1h-1zM609 251h1v2h-1zM643 251h1v2h-1zM520 259h1v1h-1zM604 259h1v2h-1zM648 259h1v2h-1zM730 259h1v1h-1zM776 259h1v1h-1zM803 259h1v1h-1zM833 259h1v1h-1zM877 185h1v3h-1zM880 174h1v4h-1zM945 176h1v1h-1zM873 198h1v3h-1zM410 266h1v1h-1zM527 266h1v1h-1zM600 266h1v1h-1zM653 266h1v2h-1zM694 266h1v1h-1zM737 266h1v1h-1zM768 266h1v1h-1zM874 194h1v4h-1zM964 194h1v1h-1zM1008 194h1v1h-1zM884 160h1v4h-1zM937 159h1v3h-1zM416 261h1v1h-1zM522 261h1v1h-1zM603 261h1v2h-1zM649 261h1v1h-1zM732 261h1v1h-1zM774 261h1v1h-1zM286 289h1v1h-1zM355 289h1v1h-1zM392 288h1v2h-1zM898 108h1v4h-1zM916 108h1v1h-1zM1009 195h1v1h-1zM890 137h1v4h-1zM930 138h1v4h-1zM524 263h1v1h-1zM602 263h1v1h-1zM650 262h1v2h-1zM734 263h1v1h-1zM771 263h1v1h-1zM290 285h1v1h-1zM350 285h1v1h-1zM304 272h1v1h-1zM405 272h1v1h-1zM534 272h1v1h-1zM596 272h1v1h-1zM657 271h1v2h-1zM106 298h1v1h-1zM466 249h1v1h-1zM510 249h1v1h-1zM611 248h1v2h-1zM642 249h1v2h-1zM147 310h1v1h-1zM415 262h1v1h-1zM523 262h1v1h-1zM733 262h1v1h-1zM305 271h1v1h-1zM406 270h1v2h-1zM533 271h1v1h-1zM597 271h1v1h-1zM75 281h1v1h-1zM225 281h1v1h-1zM264 281h1v1h-1zM294 281h1v1h-1zM346 281h1v1h-1zM398 280h1v2h-1zM895 119h1v3h-1zM923 119h1v2h-1zM409 267h1v1h-1zM528 267h1v1h-1zM599 267h1v2h-1zM412 264h1v1h-1zM525 264h1v1h-1zM651 264h1v1h-1zM735 264h1v1h-1zM770 264h1v1h-1zM82 286h1v1h-1zM217 286h1v1h-1zM272 286h1v1h-1zM289 286h1v1h-1zM394 286h1v1h-1zM901 100h1v1h-1zM910 100h1v1h-1zM892 129h1v4h-1zM889 141h1v4h-1zM931 142h1v3h-1zM389 292h1v1h-1zM152 307h1v1h-1zM253 275h1v1h-1zM301 275h1v1h-1zM341 275h1v1h-1zM402 275h1v1h-1zM538 275h1v1h-1zM592 275h1v1h-1zM295 280h1v1h-1zM345 280h1v1h-1zM303 273h1v1h-1zM404 273h1v1h-1zM535 273h1v1h-1zM595 273h1v1h-1zM658 273h1v1h-1zM887 149h1v4h-1zM934 151h1v2h-1zM233 276h1v1h-1zM300 276h1v1h-1zM342 276h1v1h-1zM401 276h1v2h-1zM539 276h1v1h-1zM591 276h1v1h-1zM468 246h1v2h-1zM507 245h1v2h-1zM613 246h1v1h-1zM640 246h1v2h-1zM868 214h1v3h-1zM307 269h1v1h-1zM407 269h1v1h-1zM598 269h1v2h-1zM655 269h1v1h-1zM875 191h1v3h-1zM961 192h1v1h-1zM966 192h1v1h-1zM1005 192h1v1h-1zM863 230h1v4h-1zM344 279h1v1h-1zM399 279h1v1h-1zM472 242h1v1h-1zM504 242h1v1h-1zM616 242h1v1h-1zM637 241h1v2h-1zM854 242h1v1h-1zM872 201h1v3h-1zM926 125h1v3h-1zM878 182h1v3h-1zM949 182h1v1h-1zM155 305h1v1h-1zM888 145h1v4h-1zM932 145h1v3h-1zM467 248h1v1h-1zM509 248h1v1h-1zM641 248h1v1h-1zM846 248h1v1h-1zM876 188h1v3h-1zM968 190h1v1h-1zM417 260h1v1h-1zM457 260h1v1h-1zM521 260h1v1h-1zM731 260h1v1h-1zM775 260h1v1h-1zM804 260h1v1h-1zM832 260h1v1h-1zM484 231h1v1h-1zM302 274h1v1h-1zM340 274h1v1h-1zM403 274h1v1h-1zM944 174h1v2h-1zM871 204h1v3h-1zM955 187h1v1h-1zM112 303h1v1h-1zM897 112h1v3h-1zM919 112h1v2h-1zM459 257h1v1h-1zM518 257h1v1h-1zM606 256h1v2h-1zM778 257h1v1h-1zM835 257h1v1h-1zM388 293h1v2h-1zM938 162h1v2h-1zM78 283h1v1h-1zM222 283h1v1h-1zM292 283h1v1h-1zM348 283h1v1h-1zM396 283h1v1h-1zM471 243h1v1h-1zM505 243h1v1h-1zM615 243h1v1h-1zM638 243h1v2h-1zM954 186h1v1h-1zM308 268h1v1h-1zM408 268h1v1h-1zM529 268h1v1h-1zM654 268h1v1h-1zM691 268h1v1h-1zM740 268h1v1h-1zM293 282h1v1h-1zM347 282h1v1h-1zM397 282h1v1h-1zM387 295h1v1h-1zM299 277h1v1h-1zM590 277h1v1h-1zM866 220h1v4h-1zM960 191h1v1h-1zM967 191h1v1h-1zM1004 191h1v1h-1zM933 148h1v3h-1zM879 178h1v4h-1zM946 177h1v2h-1zM479 235h1v1h-1zM497 235h1v1h-1zM862 234h1v2h-1zM462 253h1v2h-1zM515 254h1v1h-1zM608 253h1v2h-1zM645 254h1v2h-1zM782 254h1v1h-1zM838 254h1v1h-1zM883 164h1v3h-1zM939 164h1v3h-1zM84 288h1v1h-1zM214 288h1v1h-1zM287 288h1v1h-1zM354 288h1v1h-1zM483 232h1v1h-1zM469 245h1v1h-1zM614 244h1v2h-1zM639 245h1v1h-1zM850 245h1v1h-1zM88 291h1v1h-1zM210 291h1v1h-1zM390 291h1v1h-1zM306 270h1v1h-1zM532 270h1v1h-1zM656 270h1v1h-1zM514 253h1v1h-1zM644 253h1v1h-1zM783 253h1v1h-1zM839 253h1v1h-1zM900 101h1v4h-1zM911 101h1v2h-1zM475 239h1v1h-1zM501 239h1v1h-1zM618 239h1v2h-1zM857 239h1v1h-1zM108 300h1v1h-1zM957 189h1v1h-1zM969 189h1v1h-1zM912 103h1v1h-1zM918 110h1v2h-1zM107 299h1v1h-1zM465 250h1v1h-1zM511 250h1v1h-1zM610 250h1v1h-1zM843 250h1v1h-1zM870 207h1v3h-1zM899 105h1v3h-1zM914 105h1v1h-1zM896 115h1v4h-1zM922 117h1v2h-1zM956 188h1v1h-1zM970 188h1v1h-1zM891 133h1v4h-1zM928 132h1v3h-1zM951 184h1v1h-1zM965 193h1v1h-1zM474 240h1v1h-1zM502 240h1v1h-1zM636 240h1v1h-1zM856 240h1v1h-1zM924 121h1v2h-1zM461 255h1v1h-1zM516 255h1v1h-1zM607 255h1v1h-1zM837 255h1v1h-1zM460 256h1v1h-1zM517 256h1v1h-1zM646 256h1v1h-1zM779 256h1v1h-1zM836 256h1v1h-1zM929 135h1v3h-1zM508 247h1v1h-1zM612 247h1v1h-1zM847 247h1v1h-1zM865 224h1v3h-1zM869 210h1v4h-1zM476 238h1v1h-1zM500 238h1v1h-1zM619 238h1v1h-1zM885 156h1v4h-1zM936 156h1v3h-1zM882 167h1v4h-1zM940 167h1v2h-1zM894 122h1v4h-1zM925 123h1v2h-1zM886 153h1v3h-1zM935 153h1v3h-1zM464 251h1v1h-1zM512 251h1v1h-1zM842 251h1v1h-1zM477 237h1v1h-1zM499 237h1v1h-1zM631 237h1v1h-1zM860 237h1v1h-1zM473 241h1v1h-1zM503 241h1v1h-1zM617 241h1v1h-1zM855 241h1v1h-1zM487 229h1v1h-1zM864 227h1v3h-1zM913 104h1v1h-1zM920 114h1v2h-1zM941 169h1v2h-1zM948 181h1v1h-1zM470 244h1v1h-1zM506 244h1v1h-1zM851 244h1v1h-1zM947 179h1v2h-1zM921 116h1v1h-1zM950 183h1v1h-1zM915 106h1v2h-1zM480 234h1v1h-1zM496 234h1v1h-1zM943 173h1v1h-1zM111 302h1v1h-1zM160 302h1v1h-1zM917 109h1v1h-1z" fill="#ffffff"/>
<rect x="11" y="486" width="449" height="1" fill="#ffff00"/>
<rect x="460" y="487" width="4" height="1" fill="#ffff00"/>
<rect x="464" y="485" width="109" height="1" fill="#ffff00"/>
<rect x="573" y="487" width="5" height="1" fill="#ffff00"/>
<rect x="578" y="486" width="15" height="1" fill="#ffff00"/>
<rect x="593" y="487" width="5" height="1" fill="#ffff00"/>
<rect x="598" y="485" width="299" height="1" fill="#ffff00"/>
<rect x="897" y="486" width="5" height="1" fill="#ffff00"/>
<rect x="902" y="484" width="117" height="1" fill="#ffff00"/>
<rect x="1018" y="484" width="1" height="3" fill="#ffff00"/>
<rect x="11" y="484" width="146" height="1" fill="#00ff00"/>
<rect x="157" y="485" width="132" height="1" fill="#00ff00"/>
<rect x="289" y="486" width="171" height="1" fill="#00ff00"/>
<rect x="578" y="486" width="15" height="1" fill="#00ff00"/>
<rect x="618" y="484" width="233" height="1" fill="#00ff00"/>
<rect x="851" y="485" width="46" height="1" fill="#00ff00"/>
<rect x="11" y="487" width="449" height="1" fill="#0000ff"/>
<rect x="460" y="486" width="118" height="1" fill="#0000ff"/>
<rect x="578" y="487" width="15" height="1" fill="#0000ff"/>
<rect x="593" y="486" width="304" height="1" fill="#0000ff"/>
<rect x="897" y="485" width="122" height="1" fill="#0000ff"/>
<rect x="11" y="504" width="1009" height="1" fill="#c0c0c0"/>
<rect x="48" y="505" width="5" height="3" fill="#00ff00"/>
<rect x="205" y="503" width="5" height="1" fill="#ff0000"/>
<rect x="220" y="502" width="5" height="2" fill="#ff0000"/>
<rect x="228" y="505" width="5" height="2" fill="#00ff00"/>
<rect x="244" y="503" width="5" height="1" fill="#ff0000"/>
<rect x="251" y="505" width="5" height="5" fill="#00ff00"/>
<rect x="283" y="502" width="5" height="2" fill="#ff0000"/>
<rect x="345" y="505" width="5" height="2" fill="#00ff00"/>
<rect x="400" y="505" width="5" height="2" fill="#00ff00"/>
<rect x="462" y="502" width="5" height="2" fill="#ff0000"/>
<rect x="470" y="505" width="5" height="3" fill="#00ff00"/>
<rect x="478" y="505" width="5" height="3" fill="#00ff00"/>
<rect x="493" y="505" width="5" height="2" fill="#00ff00"/>
<rect x="501" y="505" width="5" height="2" fill="#00ff00"/>
<rect x="532" y="505" width="5" height="3" fill="#00ff00"/>
<rect x="556" y="505" width="5" height="2" fill="#00ff00"/>
<rect x="618" y="505" width="5" height="2" fill="#00ff00"/>
<rect x="626" y="505" width="5" height="2" fill="#00ff00"/>
<rect x="642" y="505" width="5" height="2" fill="#00ff00"/>
<rect x="665" y="503" width="5" height="1" fill="#ff0000"/>
<rect x="704" y="505" width="5" height="2" fill="#00ff00"/>
<rect x="727" y="505" width="5" height="2" fill="#00ff00"/>
<rect x="735" y="505" width="5" height="2" fill="#00ff00"/>
<rect x="782" y="505" width="5" height="2" fill="#00ff00"/>
<rect x="813" y="503" width="5" height="1" fill="#ff0000"/>
<rect x="829" y="505" width="5" height="2" fill="#00ff00"/>
<rect x="868" y="498" width="5" height="6" fill="#ff0000"/>
<rect x="876" y="505" width="5" height="8" fill="#00ff00"/>
<rect x="884" y="505" width="5" height="6" fill="#00ff00"/>
<rect x="891" y="505" width="5" height="4" fill="#00ff00"/>
<rect x="899" y="505" width="5" height="2" fill="#00ff00"/>
<rect x="915" y="505" width="5" height="3" fill="#00ff00"/>
<rect x="923" y="505" width="5" height="2" fill="#00ff00"/>
<rect x="954" y="505" width="5" height="2" fill="#00ff00"/>
<rect x="962" y="505" width="5" height="2" fill="#00ff00"/>
<rect x="1001" y="505" width="5" height="2" fill="#00ff00"/>
<path d="M31 503h8v1h-8zM93 503h6v1h-6zM140 503h6v1h-6zM201 503h4v1h-4zM209 503h2v1h-2zM217 503h2v1h-2zM242 503h3v1h-3zM280 503h2v1h-2zM288 503h2v1h-2zM452 503h6v1h-6zM466 503h2v1h-2zM546 503h6v1h-6zM587 503h6v1h-6zM663 503h3v1h-3zM669 503h2v1h-2zM696 503h4v1h-4zM809 503h4v1h-4zM817 503h4v1h-4zM858 503h5v1h-5zM938 503h4v1h-4zM985 503h4v1h-4zM45 505h2v1h-2zM56 505h30v1h-30zM103 505h6v1h-6zM117 505h8v1h-8zM150 505h29v1h-29zM187 505h8v1h-8zM213 505h2v1h-2zM228 505h2v1h-2zM234 505h6v1h-6zM260 505h18v1h-18zM292 505h4v1h-4zM312 505h16v1h-16zM341 505h4v1h-4zM351 505h8v1h-8zM374 505h8v1h-8zM396 505h4v1h-4zM406 505h15v1h-15zM429 505h8v1h-8zM486 505h5v1h-5zM507 505h16v1h-16zM528 505h2v1h-2zM538 505h3v1h-3zM554 505h3v1h-3zM562 505h21v1h-21zM614 505h4v1h-4zM630 505h4v1h-4zM638 505h4v1h-4zM646 505h4v1h-4zM655 505h6v1h-6zM674 505h18v1h-18zM702 505h3v1h-3zM710 505h8v1h-8zM724 505h4v1h-4zM741 505h8v1h-8zM765 505h7v1h-7zM778 505h4v1h-4zM788 505h16v1h-16zM825 505h4v1h-4zM835 505h8v1h-8zM905 505h6v1h-6zM929 505h5v1h-5zM946 505h6v1h-6zM968 505h13v1h-13zM993 505h6v1h-6zM1007 505h12v1h-12zM47 506h2v1h-2zM52 506h4v1h-4zM230 506h4v1h-4zM258 506h2v1h-2zM345 506h6v1h-6zM400 506h6v1h-6zM470 506h2v1h-2zM482 506h4v1h-4zM491 506h16v1h-16zM530 506h3v1h-3zM536 506h2v1h-2zM557 506h5v1h-5zM618 506h12v1h-12zM642 506h4v1h-4zM705 506h5v1h-5zM728 506h13v1h-13zM782 506h6v1h-6zM829 506h6v1h-6zM899 506h6v1h-6zM911 506h4v1h-4zM921 506h8v1h-8zM952 506h16v1h-16zM999 506h8v1h-8zM11 504h20v1h-20zM39 504h6v1h-6zM86 504h7v1h-7zM99 504h4v1h-4zM109 504h8v1h-8zM125 504h15v1h-15zM146 504h4v1h-4zM179 504h8v1h-8zM195 504h6v1h-6zM211 504h2v1h-2zM215 504h2v1h-2zM226 504h2v1h-2zM240 504h2v1h-2zM278 504h2v1h-2zM290 504h2v1h-2zM296 504h16v1h-16zM328 504h13v1h-13zM359 504h15v1h-15zM382 504h14v1h-14zM421 504h8v1h-8zM437 504h15v1h-15zM523 504h5v1h-5zM541 504h5v1h-5zM552 504h2v1h-2zM583 504h4v1h-4zM593 504h21v1h-21zM634 504h4v1h-4zM650 504h5v1h-5zM661 504h2v1h-2zM671 504h3v1h-3zM692 504h4v1h-4zM700 504h2v1h-2zM718 504h6v1h-6zM749 504h16v1h-16zM772 504h6v1h-6zM804 504h5v1h-5zM821 504h4v1h-4zM843 504h15v1h-15zM934 504h4v1h-4zM942 504h4v1h-4zM981 504h4v1h-4zM989 504h4v1h-4zM49 507h3v1h-3zM256 507h2v1h-2zM472 507h10v1h-10zM533 507h3v1h-3zM895 507h4v1h-4zM915 507h6v1h-6zM205 502h4v1h-4zM219 502h2v1h-2zM223 502h2v1h-2zM245 502h2v1h-2zM282 502h2v1h-2zM286 502h2v1h-2zM458 502h4v1h-4zM666 502h3v1h-3zM813 502h4v1h-4zM884 510h4v1h-4zM254 508h2v1h-2zM892 508h3v1h-3zM880 511h4v1h-4zM221 501h2v1h-2zM284 501h2v1h-2zM462 501h3v1h-3zM864 501h2v1h-2zM888 509h4v1h-4zM878 512h2v1h-2zM868 498h2v1h-2zM225 503h1v1h-1zM247 503h1v1h-1zM873 502h1v2h-1zM249 505h1v1h-1zM469 505h1v1h-1zM874 504h1v2h-1zM250 506h1v1h-1zM875 506h1v2h-1zM248 504h1v1h-1zM468 504h1v1h-1zM251 507h1v1h-1zM465 502h1v1h-1zM863 502h1v1h-1zM867 499h1v1h-1zM871 498h1v2h-1zM877 510h1v2h-1zM252 508h1v1h-1zM876 508h1v2h-1zM866 500h1v1h-1zM872 500h1v2h-1zM870 497h1v1h-1zM253 509h1v1h-1z" fill="#00ff00"/>
<rect x="11" y="504" width="1009" height="1" fill="#c0c0c0"/>
<path d="M866 495h1v2h-1zM874 495h1v2h-1zM863 501h1v2h-1zM877 501h1v2h-1zM868 491h1v2h-1zM872 491h1v2h-1zM864 499h1v2h-1zM876 499h1v2h-1zM865 497h1v2h-1zM875 497h1v2h-1zM862 503h1v2h-1zM878 503h1v2h-1zM867 493h1v2h-1zM873 493h1v2h-1zM869 489h1v2h-1zM871 489h1v2h-1zM870 487h1v2h-1z" fill="#ffffff"/>
<path d="M672 436h2v1h-2zM445 500h2v1h-2zM338 496h2v1h-2zM437 496h2v1h-2zM495 496h4v1h-4zM504 496h2v1h-2zM515 496h2v1h-2zM525 496h2v1h-2zM349 481h2v1h-2zM548 481h2v1h-2zM551 481h2v1h-2zM228 467h12v1h-12zM427 492h4v1h-4zM698 439h25v1h-25zM776 439h2v1h-2zM819 439h2v1h-2zM167 450h2v1h-2zM195 450h2v1h-2zM253 450h2v1h-2zM267 450h11v1h-11zM844 450h3v1h-3zM405 507h2v1h-2zM957 512h2v1h-2zM467 521h2v1h-2zM478 521h3v1h-3zM982 521h2v1h-2zM941 517h2v1h-2zM769 443h2v1h-2zM827 443h5v1h-5zM658 421h2v1h-2zM413 504h5v1h-5zM886 562h8v1h-8zM351 480h3v1h-3zM356 480h2v1h-2zM546 480h2v1h-2zM553 480h2v1h-2zM573 480h9v1h-9zM354 479h2v1h-2zM555 479h2v1h-2zM571 479h2v1h-2zM870 556h9v1h-9zM165 449h2v1h-2zM169 449h4v1h-4zM184 449h2v1h-2zM197 449h2v1h-2zM255 449h4v1h-4zM263 449h4v1h-4zM813 434h2v1h-2zM840 453h2v1h-2zM469 520h2v1h-2zM474 520h4v1h-4zM481 520h2v1h-2zM946 520h2v1h-2zM977 520h2v1h-2zM980 520h2v1h-2zM425 491h2v1h-2zM471 519h3v1h-3zM483 519h2v1h-2zM944 519h2v1h-2zM536 476h4v1h-4zM562 476h3v1h-3zM567 476h2v1h-2zM396 505h2v1h-2zM409 505h4v1h-4zM374 486h3v1h-3zM379 486h2v1h-2zM320 495h2v1h-2zM335 495h3v1h-3zM506 495h2v1h-2zM963 509h2v1h-2zM1010 509h9v1h-9zM113 377h9v1h-9zM683 427h2v1h-2zM317 497h2v1h-2zM439 497h2v1h-2zM499 497h5v1h-5zM517 497h2v1h-2zM521 497h4v1h-4zM82 391h2v1h-2zM363 484h9v1h-9zM382 484h2v1h-2zM187 451h2v1h-2zM973 523h2v1h-2zM986 523h2v1h-2zM322 494h2v1h-2zM333 494h2v1h-2zM434 494h2v1h-2zM508 494h2v1h-2zM512 494h2v1h-2zM347 482h2v1h-2zM359 482h2v1h-2zM583 482h2v1h-2zM932 503h2v1h-2zM543 478h2v1h-2zM557 478h3v1h-3zM632 433h2v1h-2zM811 433h2v1h-2zM88 393h2v1h-2zM761 444h8v1h-8zM11 401h10v1h-10zM372 485h2v1h-2zM587 485h2v1h-2zM670 437h2v1h-2zM209 463h2v1h-2zM959 511h2v1h-2zM84 392h4v1h-4zM685 428h2v1h-2zM441 498h2v1h-2zM519 498h2v1h-2zM605 515h8v1h-8zM783 442h2v1h-2zM823 442h4v1h-4zM540 477h3v1h-3zM560 477h2v1h-2zM689 430h2v1h-2zM798 430h10v1h-10zM163 448h2v1h-2zM173 448h11v1h-11zM259 448h4v1h-4zM443 499h2v1h-2zM465 522h2v1h-2zM984 522h2v1h-2zM377 487h2v1h-2zM21 402h2v1h-2zM39 412h2v1h-2zM880 558h2v1h-2zM407 506h2v1h-2zM189 452h2v1h-2zM192 452h2v1h-2zM244 469h3v1h-3zM43 414h8v1h-8zM361 483h2v1h-2zM384 483h3v1h-3zM447 501h2v1h-2zM655 423h2v1h-2zM687 429h2v1h-2zM41 413h2v1h-2zM51 413h2v1h-2zM919 529h2v1h-2zM400 508h2v1h-2zM403 508h2v1h-2zM213 465h11v1h-11zM207 462h2v1h-2zM884 561h2v1h-2zM757 441h2v1h-2zM772 441h2v1h-2zM780 441h3v1h-3zM324 493h9v1h-9zM431 493h3v1h-3zM510 493h2v1h-2zM674 435h2v1h-2zM792 432h2v1h-2zM485 518h2v1h-2zM741 418h2v1h-2zM224 466h4v1h-4zM534 475h2v1h-2zM565 475h2v1h-2zM774 440h2v1h-2zM778 440h2v1h-2zM240 468h4v1h-4zM23 403h3v1h-3zM961 510h2v1h-2zM58 409h9v1h-9zM124 380h2v1h-2zM667 438h3v1h-3zM971 524h2v1h-2zM794 431h4v1h-4zM808 431h2v1h-2zM211 464h2v1h-2zM31 407h2v1h-2zM36 410h2v1h-2zM56 410h2v1h-2zM923 526h2v1h-2zM743 419h2v1h-2zM161 447h2v1h-2zM26 404h2v1h-2zM28 405h2v1h-2zM132 387h2v1h-2zM738 416h2v1h-2zM33 408h2v1h-2zM54 411h2v1h-2zM158 435h1v5h-1zM629 436h1v1h-1zM666 436h1v2h-1zM695 436h1v1h-1zM724 436h1v2h-1zM753 436h1v2h-1zM789 436h1v1h-1zM816 436h1v1h-1zM302 500h1v1h-1zM315 499h1v2h-1zM393 500h1v2h-1zM419 500h1v2h-1zM493 500h1v3h-1zM598 500h1v2h-1zM614 496h1v8h-1zM862 498h1v4h-1zM1002 499h1v2h-1zM1004 499h1v2h-1zM299 496h1v1h-1zM319 496h1v1h-1zM391 494h1v3h-1zM422 496h1v1h-1zM596 496h1v2h-1zM860 495h1v2h-1zM290 481h1v3h-1zM358 481h1v1h-1zM532 479h1v3h-1zM582 481h1v1h-1zM616 481h1v7h-1zM853 481h1v5h-1zM247 465h1v3h-1zM285 465h1v3h-1zM618 465h1v8h-1zM850 467h1v4h-1zM296 492h1v2h-1zM341 492h1v2h-1zM390 492h1v2h-1zM424 492h1v2h-1zM528 490h1v3h-1zM593 492h1v1h-1zM615 488h1v8h-1zM857 492h1v1h-1zM866 524h1v7h-1zM921 528h1v1h-1zM627 439h1v2h-1zM667 439h1v1h-1zM755 439h1v1h-1zM786 439h1v2h-1zM186 450h1v1h-1zM200 449h1v2h-1zM622 449h1v2h-1zM836 450h1v1h-1zM307 507h1v2h-1zM309 507h1v2h-1zM399 507h1v1h-1zM454 507h1v1h-1zM491 506h1v2h-1zM601 506h1v2h-1zM613 504h1v8h-1zM863 502h1v7h-1zM930 507h1v4h-1zM935 507h1v2h-1zM996 507h1v2h-1zM1009 507h1v2h-1zM458 512h1v2h-1zM489 511h1v3h-1zM604 512h1v2h-1zM612 512h1v3h-1zM864 509h1v8h-1zM929 511h1v3h-1zM938 512h1v2h-1zM965 511h1v2h-1zM993 512h1v2h-1zM463 521h1v2h-1zM865 517h1v7h-1zM926 521h1v3h-1zM948 521h1v1h-1zM969 520h1v2h-1zM976 521h1v1h-1zM988 521h1v2h-1zM461 517h1v2h-1zM487 516h1v2h-1zM927 517h1v4h-1zM952 517h1v1h-1zM968 517h1v3h-1zM990 517h1v2h-1zM159 440h1v4h-1zM625 443h1v2h-1zM760 443h1v1h-1zM154 417h1v5h-1zM643 421h1v1h-1zM645 421h1v1h-1zM734 420h1v2h-1zM745 420h1v2h-1zM305 504h1v2h-1zM312 503h1v2h-1zM395 504h1v1h-1zM451 504h1v1h-1zM492 503h1v3h-1zM600 504h1v2h-1zM931 504h1v3h-1zM933 504h1v1h-1zM999 503h1v2h-1zM1007 504h1v2h-1zM906 561h1v2h-1zM289 477h1v4h-1zM617 473h1v8h-1zM852 476h1v5h-1zM155 422h1v4h-1zM640 425h1v1h-1zM649 425h1v1h-1zM653 425h1v1h-1zM661 424h1v2h-1zM732 424h1v2h-1zM747 424h1v2h-1zM545 479h1v1h-1zM869 546h1v7h-1zM911 549h1v3h-1zM909 555h1v2h-1zM910 552h1v3h-1zM835 448h1v2h-1zM846 449h1v1h-1zM846 451h1v1h-1zM157 431h1v4h-1zM631 434h1v1h-1zM665 434h1v2h-1zM676 434h1v1h-1zM694 434h1v2h-1zM726 434h1v1h-1zM752 434h1v2h-1zM790 434h1v2h-1zM191 453h1v1h-1zM202 453h1v2h-1zM252 452h1v3h-1zM279 453h1v2h-1zM620 453h1v4h-1zM838 452h1v2h-1zM847 452h1v5h-1zM110 383h1v2h-1zM128 383h1v1h-1zM462 519h1v2h-1zM949 520h1v1h-1zM989 519h1v2h-1zM292 487h1v2h-1zM344 487h1v2h-1zM388 486h1v3h-1zM529 487h1v3h-1zM590 487h1v2h-1zM854 486h1v3h-1zM295 491h1v1h-1zM342 490h1v2h-1zM389 489h1v3h-1zM592 490h1v2h-1zM856 490h1v2h-1zM950 519h1v1h-1zM979 519h1v1h-1zM288 474h1v3h-1zM534 476h1v1h-1zM311 505h1v1h-1zM452 505h1v1h-1zM934 505h1v2h-1zM998 505h1v1h-1zM291 484h1v3h-1zM345 485h1v2h-1zM530 485h1v2h-1zM589 486h1v1h-1zM298 495h1v1h-1zM340 494h1v2h-1zM423 494h1v2h-1zM436 495h1v1h-1zM514 495h1v1h-1zM526 495h1v1h-1zM595 495h1v1h-1zM308 509h1v1h-1zM402 509h1v1h-1zM456 509h1v1h-1zM490 508h1v3h-1zM602 508h1v2h-1zM936 509h1v1h-1zM995 509h1v1h-1zM867 531h1v7h-1zM915 536h1v3h-1zM107 389h1v2h-1zM136 390h1v1h-1zM156 426h1v5h-1zM638 427h1v2h-1zM651 427h1v1h-1zM662 426h1v3h-1zM731 426h1v2h-1zM748 426h1v2h-1zM300 497h1v1h-1zM392 497h1v3h-1zM421 497h1v2h-1zM495 497h1v1h-1zM861 497h1v1h-1zM78 396h1v1h-1zM91 396h1v2h-1zM104 395h1v2h-1zM140 395h1v2h-1zM79 395h1v1h-1zM90 394h1v2h-1zM106 391h1v2h-1zM137 391h1v2h-1zM346 483h1v2h-1zM387 484h1v2h-1zM531 482h1v3h-1zM586 484h1v1h-1zM194 451h1v1h-1zM201 451h1v2h-1zM253 451h1v1h-1zM278 451h1v2h-1zM621 451h1v2h-1zM837 451h1v1h-1zM843 451h1v1h-1zM464 523h1v1h-1zM970 522h1v2h-1zM297 494h1v1h-1zM527 493h1v2h-1zM594 493h1v2h-1zM859 494h1v1h-1zM206 460h1v2h-1zM249 460h1v3h-1zM282 459h1v2h-1zM619 457h1v8h-1zM848 457h1v5h-1zM109 385h1v2h-1zM131 386h1v1h-1zM386 482h1v1h-1zM550 482h1v1h-1zM870 553h1v3h-1zM304 503h1v1h-1zM394 502h1v2h-1zM418 502h1v2h-1zM450 503h1v1h-1zM599 502h1v2h-1zM1006 502h1v2h-1zM533 477h1v2h-1zM570 478h1v1h-1zM294 490h1v1h-1zM664 431h1v3h-1zM677 433h1v1h-1zM693 433h1v1h-1zM727 432h1v2h-1zM751 432h1v2h-1zM791 433h1v1h-1zM80 393h1v2h-1zM105 393h1v2h-1zM138 393h1v1h-1zM160 444h1v3h-1zM832 444h1v2h-1zM74 401h1v1h-1zM94 401h1v1h-1zM100 401h1v2h-1zM144 401h1v1h-1zM381 485h1v1h-1zM868 538h1v8h-1zM914 539h1v3h-1zM205 458h1v2h-1zM250 457h1v3h-1zM628 437h1v2h-1zM696 437h1v1h-1zM788 437h1v1h-1zM817 437h1v1h-1zM913 542h1v4h-1zM248 463h1v2h-1zM284 463h1v2h-1zM849 462h1v5h-1zM457 510h1v2h-1zM603 510h1v2h-1zM937 510h1v2h-1zM994 510h1v2h-1zM81 392h1v1h-1zM682 428h1v1h-1zM730 428h1v2h-1zM749 428h1v2h-1zM301 498h1v2h-1zM316 498h1v1h-1zM494 498h1v2h-1zM597 498h1v2h-1zM1003 498h1v1h-1zM956 513h1v1h-1zM966 513h1v2h-1zM459 514h1v2h-1zM488 514h1v2h-1zM928 514h1v3h-1zM939 514h1v2h-1zM954 515h1v1h-1zM967 515h1v2h-1zM992 514h1v2h-1zM626 441h1v2h-1zM759 442h1v1h-1zM771 442h1v1h-1zM569 477h1v1h-1zM108 387h1v2h-1zM134 388h1v1h-1zM636 430h1v1h-1zM663 429h1v2h-1zM680 430h1v1h-1zM729 430h1v1h-1zM750 430h1v2h-1zM199 448h1v1h-1zM623 447h1v2h-1zM420 499h1v1h-1zM287 471h1v3h-1zM851 471h1v5h-1zM303 501h1v2h-1zM313 502h1v1h-1zM449 502h1v1h-1zM932 502h1v1h-1zM1000 502h1v1h-1zM975 522h1v1h-1zM73 402h1v1h-1zM95 402h1v2h-1zM145 402h1v1h-1zM76 398h1v2h-1zM92 398h1v1h-1zM102 398h1v2h-1zM142 398h1v1h-1zM53 412h1v1h-1zM152 410h1v3h-1zM908 557h1v2h-1zM306 506h1v1h-1zM310 506h1v1h-1zM398 506h1v1h-1zM453 506h1v1h-1zM997 506h1v1h-1zM1008 506h1v1h-1zM842 452h1v1h-1zM286 468h1v3h-1zM153 413h1v4h-1zM585 483h1v1h-1zM922 527h1v1h-1zM314 501h1v1h-1zM1001 501h1v1h-1zM1005 501h1v1h-1zM642 422h1v2h-1zM647 423h1v1h-1zM660 422h1v2h-1zM733 422h1v2h-1zM746 422h1v2h-1zM912 546h1v3h-1zM637 429h1v1h-1zM681 429h1v1h-1zM918 530h1v1h-1zM455 508h1v1h-1zM283 461h1v2h-1zM883 560h1v1h-1zM907 559h1v2h-1zM785 441h1v1h-1zM822 441h1v1h-1zM460 516h1v1h-1zM940 516h1v1h-1zM953 516h1v1h-1zM991 516h1v1h-1zM75 400h1v1h-1zM93 399h1v2h-1zM101 400h1v1h-1zM143 399h1v2h-1zM858 493h1v1h-1zM630 435h1v1h-1zM725 435h1v1h-1zM815 435h1v1h-1zM634 432h1v1h-1zM678 432h1v1h-1zM692 432h1v1h-1zM810 432h1v1h-1zM943 518h1v1h-1zM951 518h1v1h-1zM879 557h1v1h-1zM735 418h1v2h-1zM281 457h1v2h-1zM839 454h1v1h-1zM895 564h1v1h-1zM905 563h1v2h-1zM624 445h1v2h-1zM833 446h1v1h-1zM901 571h1v1h-1zM756 440h1v1h-1zM821 440h1v1h-1zM246 468h1v1h-1zM897 566h1v2h-1zM904 565h1v2h-1zM644 420h1v1h-1zM659 420h1v1h-1zM605 514h1v1h-1zM955 514h1v1h-1zM72 403h1v1h-1zM99 403h1v1h-1zM146 403h1v1h-1zM639 426h1v1h-1zM650 426h1v1h-1zM652 426h1v1h-1zM646 422h1v1h-1zM657 422h1v1h-1zM204 456h1v2h-1zM251 455h1v2h-1zM280 455h1v2h-1zM77 397h1v1h-1zM103 397h1v1h-1zM141 397h1v1h-1zM293 489h1v1h-1zM343 489h1v1h-1zM591 489h1v1h-1zM855 489h1v1h-1zM964 510h1v1h-1zM30 406h1v1h-1zM69 406h1v1h-1zM97 406h1v1h-1zM148 405h1v2h-1zM641 424h1v1h-1zM648 424h1v1h-1zM654 424h1v1h-1zM736 416h1v2h-1zM740 417h1v1h-1zM35 409h1v1h-1zM151 409h1v1h-1zM112 379h1v2h-1zM697 438h1v1h-1zM723 438h1v1h-1zM754 438h1v1h-1zM787 438h1v1h-1zM818 438h1v1h-1zM882 559h1v1h-1zM925 524h1v2h-1zM635 431h1v1h-1zM679 431h1v1h-1zM691 431h1v1h-1zM728 431h1v1h-1zM111 381h1v2h-1zM127 382h1v1h-1zM917 531h1v2h-1zM68 407h1v1h-1zM149 407h1v1h-1zM139 394h1v1h-1zM135 389h1v1h-1zM203 455h1v1h-1zM123 379h1v1h-1zM126 381h1v1h-1zM916 533h1v3h-1zM130 385h1v1h-1zM834 447h1v1h-1zM71 404h1v1h-1zM96 404h1v2h-1zM98 404h1v2h-1zM147 404h1v1h-1zM903 567h1v2h-1zM70 405h1v1h-1zM900 570h1v1h-1zM902 569h1v2h-1zM971 525h1v1h-1zM67 408h1v1h-1zM150 408h1v1h-1zM899 569h1v1h-1zM129 384h1v1h-1zM38 411h1v1h-1zM894 563h1v1h-1zM737 415h1v1h-1zM898 568h1v1h-1zM896 565h1v1h-1zM113 378h1v1h-1zM122 378h1v1h-1z" fill="#ffffff"/>
</g>
<g opacity="0.999">
<text class="cjk" x="11" y="14.56" font-size="12" fill="#d0d0d0">神州高铁</text>
<text x="60.5" y="14.0" font-size="12" fill="#d0d0d0" font-family="Liberation Sans, sans-serif" text-anchor="start" xml:space="preserve">(</text>
<text class="cjk" x="64" y="14.56" font-size="12" fill="#d0d0d0">日线</text>
<text x="88.0" y="14.0" font-size="12" fill="#d0d0d0" font-family="Liberation Sans, sans-serif" text-anchor="start" xml:space="preserve">)</text>
<circle cx="103.0" cy="10.5" r="6" fill="#808080"/>
<polyline points="99.8,9.3 103.0,12.5 106.2,9.3" fill="none" stroke="#101010" stroke-width="1.2"/>
<text x="114.0" y="14.0" font-size="12" fill="#ffffff" font-family="Liberation Sans, sans-serif" textLength="52.0" lengthAdjust="spacing" text-anchor="start" xml:space="preserve">MA5: 3.05</text>
<rect x="170" y="3" width="1" height="13" fill="#40e8f8"/>
<path d="M170 16l2.5 -4h-4z" fill="#40e8f8"/>
<text x="181.5" y="14.0" font-size="12" fill="#ffff00" font-family="Liberation Sans, sans-serif" textLength="59.0" lengthAdjust="spacing" text-anchor="start" xml:space="preserve">MA10: 3.07</text>
<rect x="245" y="3" width="1" height="13" fill="#40e8f8"/>
<path d="M245 16l2.5 -4h-4z" fill="#40e8f8"/>
<text x="256.5" y="14.0" font-size="12" fill="#ff00ff" font-family="Liberation Sans, sans-serif" textLength="59.5" lengthAdjust="spacing" text-anchor="start" xml:space="preserve">MA20: 3.16</text>
<rect x="320" y="3" width="1" height="13" fill="#ff3030"/>
<path d="M320 4l2.5 4h-4z" fill="#ff3030"/>
<text x="331.3" y="14.0" font-size="12" fill="#00ff00" font-family="Liberation Sans, sans-serif" textLength="59.0" lengthAdjust="spacing" text-anchor="start" xml:space="preserve">MA60: 2.98</text>
<rect x="395" y="3" width="1" height="13" fill="#ff3030"/>
<path d="M395 4l2.5 4h-4z" fill="#ff3030"/>
<text x="406.3" y="14.0" font-size="12" fill="#c8c8c8" font-family="Liberation Sans, sans-serif" textLength="65.5" lengthAdjust="spacing" text-anchor="start" xml:space="preserve">MA120: 2.91</text>
<rect x="477" y="3" width="1" height="13" fill="#ff3030"/>
<path d="M477 4l2.5 4h-4z" fill="#ff3030"/>
<text x="488.5" y="14.0" font-size="12" fill="#0000ff" font-family="Liberation Sans, sans-serif" textLength="65.5" lengthAdjust="spacing" text-anchor="start" xml:space="preserve">MA250: 2.86</text>
<rect x="559" y="3" width="1" height="13" fill="#ff3030"/>
<path d="M559 4l2.5 4h-4z" fill="#ff3030"/>
<text x="893.0" y="30.8" font-size="12" fill="#c8c8c8" font-family="Liberation Sans, sans-serif" textLength="22.5" lengthAdjust="spacing" text-anchor="start" xml:space="preserve">3.55</text>
<path d="M878.5 21.5L890 25.5M878.5 20.5h4M878.5 21.5l2.5 3.5" stroke="#c8c8c8" stroke-width="1" fill="none"/>
<text x="142.0" y="345.0" font-size="12" fill="#c8c8c8" font-family="Liberation Sans, sans-serif" textLength="22.5" lengthAdjust="spacing" text-anchor="start" xml:space="preserve">2.67</text>
<path d="M128.5 339.5h11.5M128.5 339.5l3 -2.5M128.5 339.5l3 2.5" stroke="#c8c8c8" stroke-width="1" fill="none"/>
<path d="M1018.5 5l5.5 5.5l-5.5 5.5l-5.5 -5.5z" fill="none" stroke="#808080" stroke-width="1"/>
<rect x="1031" y="5" width="1" height="10" fill="#c0c0c0"/>
<path d="M777 343h10l3 3v10h-13z" fill="#10397c"/>
<text class="cjk" x="777.5" y="354.06" font-size="12" fill="#ffffff">财</text>
<path d="M863 343h10l3 3v10h-13z" fill="#820000"/>
<text class="cjk" x="863.5" y="354.06" font-size="12" fill="#ffffff">涨</text>
<circle cx="16.0" cy="366.0" r="6" fill="#808080"/>
<polyline points="12.8,364.8 16.0,368.0 19.2,364.8" fill="none" stroke="#101010" stroke-width="1.2"/>
<text class="cjk" x="26.5" y="370.56" font-size="12" fill="#d0d0d0">主力行为</text>
<text class="cjk" x="79" y="370.56" font-size="12" fill="#ffffff">主力成本</text>
<text x="127.0" y="370.5" font-size="12" fill="#ffffff" font-family="Liberation Sans, sans-serif" textLength="30.0" lengthAdjust="spacing" text-anchor="start" xml:space="preserve">: 3.06</text>
<rect x="161" y="359" width="1" height="12" fill="#40e8f8"/>
<path d="M161 371l2.5 -4h-4z" fill="#40e8f8"/>
<text class="cjk" x="172" y="370.56" font-size="12" fill="#ffff00">主力成本线</text>
<text x="232.0" y="370.5" font-size="12" fill="#ffff00" font-family="Liberation Sans, sans-serif" textLength="30.0" lengthAdjust="spacing" text-anchor="start" xml:space="preserve">: 3.06</text>
<rect x="266" y="359" width="1" height="12" fill="#40e8f8"/>
<path d="M266 371l2.5 -4h-4z" fill="#40e8f8"/>
<text class="cjk" x="277" y="370.56" font-size="12" fill="#00ff00">压力线</text>
<text x="313.0" y="370.5" font-size="12" fill="#00ff00" font-family="Liberation Sans, sans-serif" textLength="30.0" lengthAdjust="spacing" text-anchor="start" xml:space="preserve">: 3.03</text>
<text class="cjk" x="348" y="370.56" font-size="12" fill="#00ff00">主力资金</text>
<text x="396.0" y="370.5" font-size="12" fill="#00ff00" font-family="Liberation Sans, sans-serif" textLength="34.0" lengthAdjust="spacing" text-anchor="start" xml:space="preserve">: -0.13</text>
<rect x="434" y="359" width="1" height="12" fill="#40e8f8"/>
<path d="M434 371l2.5 -4h-4z" fill="#40e8f8"/>
<text class="cjk" x="445" y="370.56" font-size="12" fill="#c8c8c8">主力动作</text>
<text x="493.0" y="370.5" font-size="12" fill="#c8c8c8" font-family="Liberation Sans, sans-serif" textLength="30.0" lengthAdjust="spacing" text-anchor="start" xml:space="preserve">: 0.00</text>
<text class="cjk" x="527.5" y="370.56" font-size="12" fill="#0000ff">当前成本</text>
<text x="576.5" y="370.5" font-size="12" fill="#0000ff" font-family="Liberation Sans, sans-serif" textLength="30.0" lengthAdjust="spacing" text-anchor="start" xml:space="preserve">: 3.06</text>
<rect x="610" y="359" width="1" height="12" fill="#40e8f8"/>
<path d="M610 371l2.5 -4h-4z" fill="#40e8f8"/>
<text class="cjk" x="621" y="370.56" font-size="12" fill="#ffffff">距压力位</text>
<text x="669.0" y="370.5" font-size="12" fill="#ffffff" font-family="Liberation Sans, sans-serif" textLength="34.0" lengthAdjust="spacing" text-anchor="start" xml:space="preserve">: -0.66</text>
<text class="cjk" x="870" y="491.56" font-size="12" fill="#ff0000">拉</text>
<text class="cjk" x="881.5" y="491.56" font-size="12" fill="#ff0000">升</text>
</g>
<rect x="167" y="576" width="1" height="2" fill="#54ffff"/>
<rect x="236" y="576" width="1" height="2" fill="#54ffff"/>
<rect x="319" y="576" width="1" height="2" fill="#ff3232"/></svg></body></html>
